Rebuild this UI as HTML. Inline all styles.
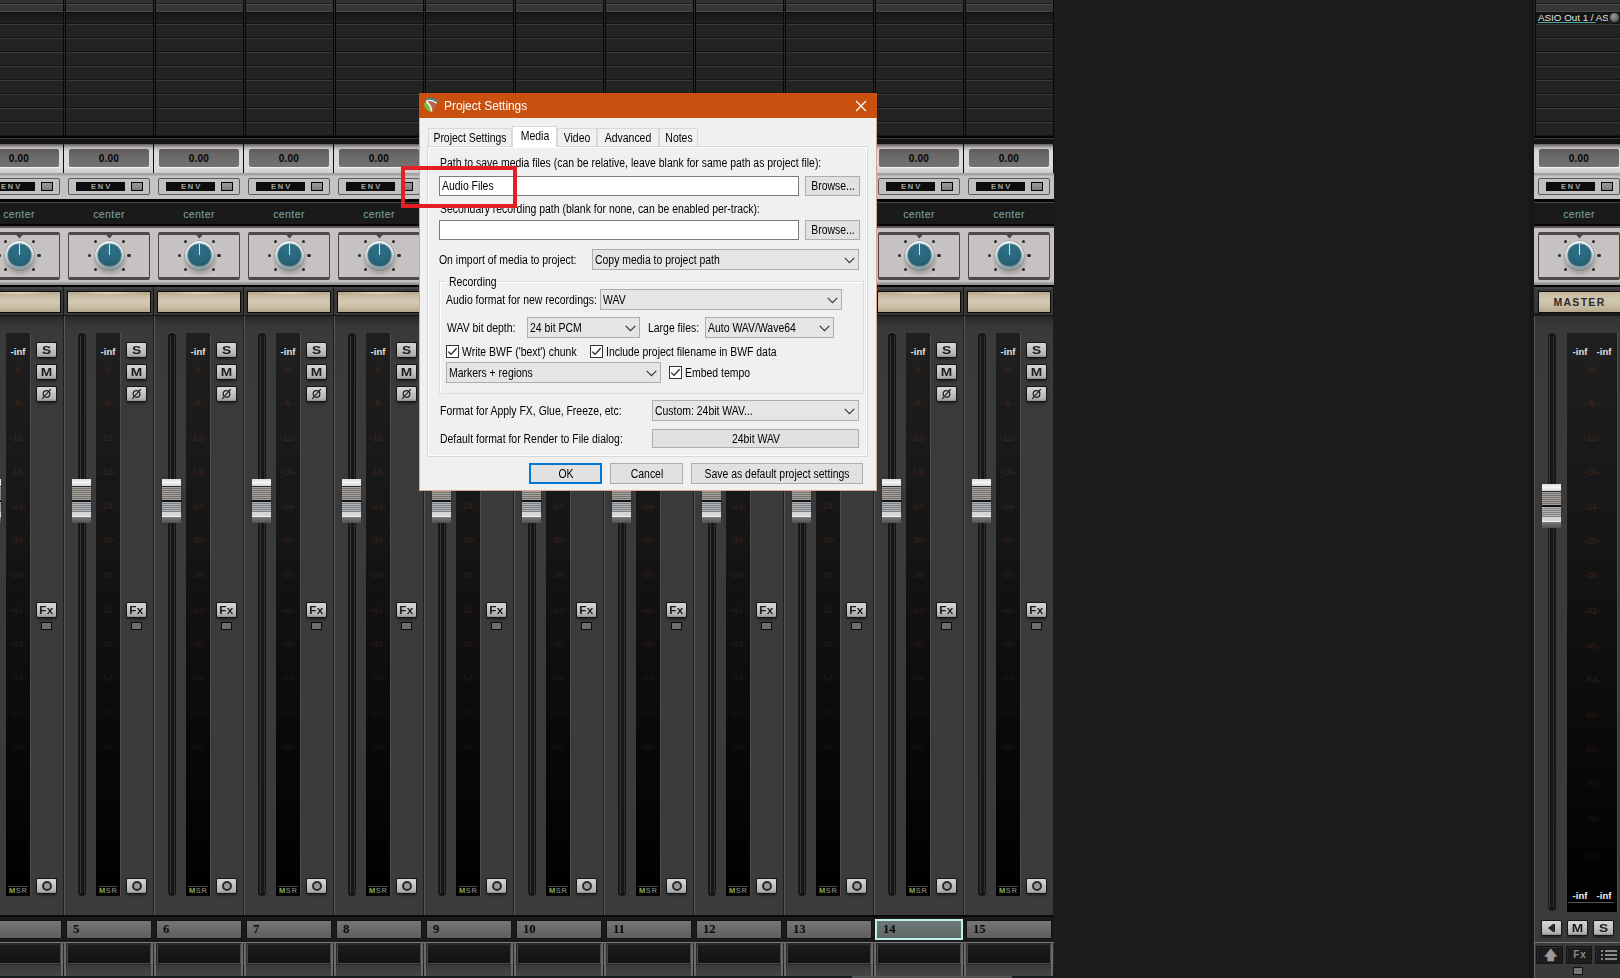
<!DOCTYPE html><html><head><meta charset="utf-8"><style>
*{box-sizing:border-box;margin:0;padding:0}
html,body{width:1620px;height:978px;overflow:hidden;background:#1c1c1c;font-family:"Liberation Sans",sans-serif}
div{position:absolute}
.strip{top:0;width:90px;height:978px;overflow:hidden}
.btn{background:linear-gradient(#d6d6d6,#c6c6c6 40%,#b2b2b2 85%,#8c8c8c);border-radius:1px;box-shadow:0 0 0 1px #161616,0 2px 3px rgba(0,0,0,.6);color:#1c1c1c;font-weight:bold;font-size:11px;text-align:center;line-height:14px}
.bl{display:inline-block;transform:scaleX(1.25)}
.lbl{white-space:nowrap;transform-origin:0 50%;color:#000;font-size:12px;line-height:14px}
.combo{background:#e5e5e5;border:1px solid #adadad}
.wbtn{background:#e1e1e1;border:1px solid #adadad}
.chev{width:9px;height:9px;border-right:1px solid #333;border-bottom:1px solid #333;transform:rotate(45deg)}
.cb{width:13px;height:13px;border:1px solid #333;background:#fff}
.db{color:#3e2619;font-size:9px;font-weight:bold;text-align:center;line-height:8px;filter:blur(.6px);opacity:.85}
</style></head><body><div class="strip" style="left:-26px"><div style="left:0px;top:0px;width:90px;height:3px;background:#333"></div><div style="left:0px;top:3px;width:90px;height:1px;background:#1a1a1a"></div><div style="left:0px;top:4px;width:90px;height:1px;background:#4a4a4a"></div><div style="left:0px;top:5px;width:90px;height:6px;background:#363636"></div><div style="left:0px;top:11px;width:90px;height:1px;background:#4c4c4c"></div><div style="left:0px;top:12px;width:90px;height:1px;background:#0d0d0d"></div><div style="left:0px;top:13px;width:90px;height:10px;background:linear-gradient(#171717,#212121)"></div><div style="left:0px;top:23px;width:90px;height:1px;background:#141414"></div><div style="left:0px;top:24px;width:90px;height:1px;background:#3a3a3a"></div><div style="left:0px;top:25px;width:90px;height:12px;background:#232323"></div><div style="left:0px;top:37px;width:90px;height:1px;background:#141414"></div><div style="left:0px;top:38px;width:90px;height:1px;background:#3a3a3a"></div><div style="left:0px;top:39px;width:90px;height:12px;background:#232323"></div><div style="left:0px;top:51px;width:90px;height:1px;background:#141414"></div><div style="left:0px;top:52px;width:90px;height:1px;background:#3a3a3a"></div><div style="left:0px;top:53px;width:90px;height:12px;background:#232323"></div><div style="left:0px;top:65px;width:90px;height:1px;background:#141414"></div><div style="left:0px;top:66px;width:90px;height:1px;background:#3a3a3a"></div><div style="left:0px;top:67px;width:90px;height:12px;background:#232323"></div><div style="left:0px;top:79px;width:90px;height:1px;background:#141414"></div><div style="left:0px;top:80px;width:90px;height:1px;background:#3a3a3a"></div><div style="left:0px;top:81px;width:90px;height:12px;background:#232323"></div><div style="left:0px;top:93px;width:90px;height:1px;background:#141414"></div><div style="left:0px;top:94px;width:90px;height:1px;background:#3a3a3a"></div><div style="left:0px;top:95px;width:90px;height:12px;background:#232323"></div><div style="left:0px;top:107px;width:90px;height:1px;background:#141414"></div><div style="left:0px;top:108px;width:90px;height:1px;background:#3a3a3a"></div><div style="left:0px;top:109px;width:90px;height:12px;background:#232323"></div><div style="left:0px;top:121px;width:90px;height:1px;background:#141414"></div><div style="left:0px;top:122px;width:90px;height:1px;background:#3a3a3a"></div><div style="left:0px;top:123px;width:90px;height:12px;background:#232323"></div><div style="left:0px;top:135px;width:90px;height:1px;background:#141414"></div><div style="left:0px;top:136px;width:90px;height:1px;background:#3a3a3a"></div><div style="left:0px;top:0px;width:1px;height:136px;background:#262626"></div><div style="left:1px;top:0px;width:1px;height:136px;background:#080808"></div><div style="left:89px;top:0px;width:1px;height:136px;background:#080808"></div><div style="left:0px;top:136px;width:90px;height:2px;background:#050505"></div><div style="left:0px;top:138px;width:90px;height:1px;background:#3a3a3a"></div><div style="left:0px;top:139px;width:90px;height:5px;background:#151515"></div><div style="left:0px;top:144px;width:90px;height:29px;background:linear-gradient(#5e5c5c,#bebcbc 4px,#dad8d8 8px,#dcdada 24px,#cfcdcd)"></div><div style="left:89px;top:144px;width:1px;height:29px;background:#0a0a0a"></div><div style="left:5px;top:149px;width:80px;height:18px;background:linear-gradient(#5c5858,#6a6767 30%,#747272);border-radius:2px;box-shadow:0 1px 0 #f4f4f4;font-weight:bold;font-size:10px;color:#050505;text-align:center;line-height:19px;letter-spacing:.2px">0.00</div><div style="left:0px;top:173px;width:90px;height:3px;background:linear-gradient(#9a9898,#b6b4b4)"></div><div style="left:0px;top:176px;width:90px;height:23px;background:#c4c2c2"></div><div style="left:4px;top:178px;width:82px;height:17px;border:1px solid #5e5a5a;border-radius:2px;background:#c2c0c0"></div><div style="left:12px;top:182px;width:49px;height:9px;background:#0c0c0c;color:#a8a8a8;font-size:7.5px;font-weight:bold;letter-spacing:1.9px;text-align:center;line-height:9px;text-indent:2px">ENV</div><div style="left:67px;top:182px;width:12px;height:9px;border:1px solid #050505;background:linear-gradient(#9a9a9a,#7c7c7c)"></div><div style="left:0px;top:199px;width:90px;height:3px;background:#050505"></div><div style="left:0px;top:202px;width:90px;height:1px;background:#444"></div><div style="left:0px;top:203px;width:90px;height:21px;background:#1a1a1a;color:#84a0a8;font-size:10.5px;text-align:center;line-height:22px;letter-spacing:.4px;text-shadow:0 0 2px #0a3038">center</div><div style="left:0px;top:224px;width:90px;height:2px;background:#050505"></div><div style="left:0px;top:226px;width:90px;height:2px;background:#5a5858"></div><div style="left:0px;top:228px;width:90px;height:54px;background:#c6c2c2"></div><div style="left:4px;top:232px;width:82px;height:48px;border:1px solid #4a4646;border-top:3px solid #4c4848;border-bottom:3px solid #4c4848;border-radius:2px;background:#c6c2c2"></div><div style="left:41.5px;top:234px;width:8px;height:4.5px;background:#4c4848;clip-path:polygon(0 0,100% 0,50% 100%)"></div><div style="left:29.799999999999997px;top:239.9px;width:3.2px;height:3.2px;background:#2e2828;border-radius:50%"></div><div style="left:57.8px;top:239.9px;width:3.2px;height:3.2px;background:#2e2828;border-radius:50%"></div><div style="left:24.099999999999998px;top:253.9px;width:3.2px;height:3.2px;background:#2e2828;border-radius:50%"></div><div style="left:63.4px;top:253.9px;width:3.2px;height:3.2px;background:#2e2828;border-radius:50%"></div><div style="left:29.799999999999997px;top:267.9px;width:3.2px;height:3.2px;background:#2e2828;border-radius:50%"></div><div style="left:57.8px;top:267.9px;width:3.2px;height:3.2px;background:#2e2828;border-radius:50%"></div><div style="left:28.4px;top:244.5px;width:36px;height:32px;border-radius:50%;background:radial-gradient(closest-side,rgba(40,30,30,.55),rgba(40,30,30,0))"></div><div style="left:30.799999999999997px;top:240.7px;width:29.3px;height:29.6px;border-radius:50%;background:linear-gradient(175deg,#f0f4f4 0%,#d4dcdd 40%,#a3b3b6 75%,#7d9195 100%);box-shadow:0 0 0 .6px rgba(70,80,80,.45)"></div><div style="left:34.2px;top:243.8px;width:22.4px;height:22.4px;border-radius:50%;background:radial-gradient(circle at 50% 30%,#2f7188,#28657b 60%,#1e5062 100%);box-shadow:0 0 0 .6px #5a7a80"></div><div style="left:44.699999999999996px;top:244.0px;width:1.4px;height:10.5px;background:#cdeed6"></div><div style="left:0px;top:282px;width:90px;height:3px;background:linear-gradient(#b0acac,#8e8a8a)"></div><div style="left:0px;top:285px;width:90px;height:2px;background:#050505"></div><div style="left:0px;top:287px;width:90px;height:29px;background:#383836"></div><div style="left:0px;top:287px;width:90px;height:2px;background:#42464c"></div><div style="left:0px;top:315px;width:90px;height:1px;background:#141414"></div><div style="left:89px;top:287px;width:1px;height:29px;background:#141414"></div><div style="left:3px;top:291px;width:84px;height:22px;background:#0e0c0a"></div><div style="left:4px;top:292px;width:82px;height:20px;background:radial-gradient(ellipse 40% 3px at 50% 0,rgba(255,235,200,.8),rgba(255,235,200,0)),linear-gradient(#b6a78c,#cbc0a6 25%,#d3c9b4 50%,#c6baa2 80%,#b3a68c)"></div><div style="left:0px;top:316px;width:90px;height:599px;background:linear-gradient(#262626 0,#353535 8px,#3a3a3a 16px,#3b3b3b)"></div><div style="left:0px;top:316px;width:1px;height:599px;background:#585858"></div><div style="left:89px;top:316px;width:1px;height:599px;background:#1e1e1e"></div><div style="left:14px;top:333px;width:8px;height:563px;background:#161616;border-radius:4px;box-shadow:0 -1px 0 #444"></div><div style="left:15.5px;top:336px;width:1px;height:557px;background:#3a3a3a"></div><div style="left:19.5px;top:336px;width:1px;height:557px;background:#2e2e2e"></div><div style="left:32px;top:333px;width:24px;height:563px;background:linear-gradient(#1f1f1f,#141414 40%,#050505 85%,#000)"></div><div style="left:56px;top:333px;width:1px;height:563px;background:#4c4c4c"></div><div style="left:32px;top:346px;width:24px;height:12px;color:#e2e2e2;font-size:9.5px;font-weight:bold;text-align:center;line-height:12px">-inf</div><div class="db" style="left:32px;top:365.6px;width:24px;height:8px;opacity:0.95">-0-</div><div class="db" style="left:32px;top:399px;width:24px;height:8px;opacity:0.88">-6-</div><div class="db" style="left:32px;top:433.8px;width:24px;height:8px;opacity:0.81">-12-</div><div class="db" style="left:32px;top:468px;width:24px;height:8px;opacity:0.74">-18-</div><div class="db" style="left:32px;top:502px;width:24px;height:8px;opacity:0.67">-24-</div><div class="db" style="left:32px;top:536px;width:24px;height:8px;opacity:0.60">-30-</div><div class="db" style="left:32px;top:571px;width:24px;height:8px;opacity:0.53">-36-</div><div class="db" style="left:32px;top:605.7px;width:24px;height:8px;opacity:0.46">-42-</div><div class="db" style="left:32px;top:639.5px;width:24px;height:8px;opacity:0.39">-48-</div><div class="db" style="left:32px;top:674px;width:24px;height:8px;opacity:0.32">-54-</div><div class="db" style="left:32px;top:709px;width:24px;height:8px;opacity:0.25">-60-</div><div class="db" style="left:32px;top:743px;width:24px;height:8px;opacity:0.25">-66-</div><div style="left:34px;top:886px;width:20px;height:1px;background:#454545"></div><div style="left:34px;top:887px;width:22px;height:8px;font-size:7.5px;font-weight:bold;line-height:8px;color:#6f6f6f;letter-spacing:.6px;text-indent:1px"><span style="color:#86a85a">M</span>SR</div><div class="btn" style="left:63px;top:343px;width:19px;height:14px;"><span class="bl">S</span></div><div class="btn" style="left:63px;top:365px;width:19px;height:14px;"><span class="bl">M</span></div><div class="btn" style="left:63px;top:387px;width:19px;height:14px;"><svg style="position:absolute;left:4px;top:1px" width="11" height="12" viewBox="0 0 11 12"><circle cx="5.5" cy="6" r="3.3" fill="none" stroke="#222" stroke-width="1.3"/><path d="M1.2 10.8L9.8 1.2" stroke="#222" stroke-width="1.2"/></svg></div><div class="btn" style="left:63px;top:603px;width:19px;height:14px;font-size:10.5px;letter-spacing:.2px"><span class="bl" style="transform:scaleX(1.12)">Fx</span></div><div style="left:67px;top:622px;width:11px;height:8px;border:1px solid #0a0a0a;background:#6e6e6e"></div><div class="btn" style="left:63px;top:879px;width:19px;height:14px;"><div style="left:5px;top:2px;width:10px;height:10px;border-radius:50%;border:2px solid #2a2a2a;background:#9a9a9a"></div></div><div style="left:5px;top:477px;width:25px;height:49px;background:radial-gradient(closest-side,rgba(0,0,0,.6),rgba(0,0,0,0))"></div><div style="left:8px;top:479px;width:19px;height:7px;background:linear-gradient(#dcdcdc,#f6f6f6 50%,#d4d4d4)"></div><div style="left:8px;top:486px;width:19px;height:1px;background:#2a2826"></div><div style="left:8px;top:487px;width:19px;height:13px;background:repeating-linear-gradient(#a6a29e 0,#a6a29e 1px,#75716d 1px,#75716d 2px)"></div><div style="left:8px;top:500px;width:19px;height:2px;background:#121212"></div><div style="left:8px;top:502px;width:19px;height:10px;background:repeating-linear-gradient(#b0b4b6 0,#b0b4b6 1px,#7e8284 1px,#7e8284 2px)"></div><div style="left:8px;top:512px;width:19px;height:4px;background:#d6d6d4"></div><div style="left:8px;top:516px;width:19px;height:1px;background:#f2f2f2"></div><div style="left:8px;top:517px;width:19px;height:6px;background:linear-gradient(#7c7c7c,#505050)"></div><div style="left:0px;top:915px;width:90px;height:2px;background:#0a0a0a"></div><div style="left:0px;top:917px;width:90px;height:25px;background:#1a1a1a"></div><div style="left:2px;top:920px;width:86px;height:19px;background:#111"></div><div style="left:3px;top:921px;width:84px;height:17px;background:linear-gradient(#777,#6a6a6a 50%,#5e5e5e)"></div><div style="left:9px;top:921px;width:40px;height:17px;font-family:'Liberation Serif',serif;font-weight:bold;font-size:12.5px;line-height:17px;color:#0a0a0a"></div><div style="left:0px;top:942px;width:90px;height:1px;background:#7a7a7a"></div><div style="left:0px;top:943px;width:90px;height:22px;background:#2a2a2a"></div><div style="left:0px;top:942px;width:2px;height:34px;background:#6a6a6a"></div><div style="left:87px;top:942px;width:2px;height:34px;background:#6a6a6a"></div><div style="left:3px;top:944px;width:84px;height:20px;background:linear-gradient(#1c1c1c,#121212);border:1px solid #4a4a4a;border-top-color:#2a2a2a"></div><div style="left:2px;top:965px;width:85px;height:11px;background:linear-gradient(#3a3a3a,#454545)"></div><div style="left:0px;top:976px;width:90px;height:2px;background:#1b1e21"></div></div><div class="strip" style="left:64px"><div style="left:0px;top:0px;width:90px;height:3px;background:#333"></div><div style="left:0px;top:3px;width:90px;height:1px;background:#1a1a1a"></div><div style="left:0px;top:4px;width:90px;height:1px;background:#4a4a4a"></div><div style="left:0px;top:5px;width:90px;height:6px;background:#363636"></div><div style="left:0px;top:11px;width:90px;height:1px;background:#4c4c4c"></div><div style="left:0px;top:12px;width:90px;height:1px;background:#0d0d0d"></div><div style="left:0px;top:13px;width:90px;height:10px;background:linear-gradient(#171717,#212121)"></div><div style="left:0px;top:23px;width:90px;height:1px;background:#141414"></div><div style="left:0px;top:24px;width:90px;height:1px;background:#3a3a3a"></div><div style="left:0px;top:25px;width:90px;height:12px;background:#232323"></div><div style="left:0px;top:37px;width:90px;height:1px;background:#141414"></div><div style="left:0px;top:38px;width:90px;height:1px;background:#3a3a3a"></div><div style="left:0px;top:39px;width:90px;height:12px;background:#232323"></div><div style="left:0px;top:51px;width:90px;height:1px;background:#141414"></div><div style="left:0px;top:52px;width:90px;height:1px;background:#3a3a3a"></div><div style="left:0px;top:53px;width:90px;height:12px;background:#232323"></div><div style="left:0px;top:65px;width:90px;height:1px;background:#141414"></div><div style="left:0px;top:66px;width:90px;height:1px;background:#3a3a3a"></div><div style="left:0px;top:67px;width:90px;height:12px;background:#232323"></div><div style="left:0px;top:79px;width:90px;height:1px;background:#141414"></div><div style="left:0px;top:80px;width:90px;height:1px;background:#3a3a3a"></div><div style="left:0px;top:81px;width:90px;height:12px;background:#232323"></div><div style="left:0px;top:93px;width:90px;height:1px;background:#141414"></div><div style="left:0px;top:94px;width:90px;height:1px;background:#3a3a3a"></div><div style="left:0px;top:95px;width:90px;height:12px;background:#232323"></div><div style="left:0px;top:107px;width:90px;height:1px;background:#141414"></div><div style="left:0px;top:108px;width:90px;height:1px;background:#3a3a3a"></div><div style="left:0px;top:109px;width:90px;height:12px;background:#232323"></div><div style="left:0px;top:121px;width:90px;height:1px;background:#141414"></div><div style="left:0px;top:122px;width:90px;height:1px;background:#3a3a3a"></div><div style="left:0px;top:123px;width:90px;height:12px;background:#232323"></div><div style="left:0px;top:135px;width:90px;height:1px;background:#141414"></div><div style="left:0px;top:136px;width:90px;height:1px;background:#3a3a3a"></div><div style="left:0px;top:0px;width:1px;height:136px;background:#262626"></div><div style="left:1px;top:0px;width:1px;height:136px;background:#080808"></div><div style="left:89px;top:0px;width:1px;height:136px;background:#080808"></div><div style="left:0px;top:136px;width:90px;height:2px;background:#050505"></div><div style="left:0px;top:138px;width:90px;height:1px;background:#3a3a3a"></div><div style="left:0px;top:139px;width:90px;height:5px;background:#151515"></div><div style="left:0px;top:144px;width:90px;height:29px;background:linear-gradient(#5e5c5c,#bebcbc 4px,#dad8d8 8px,#dcdada 24px,#cfcdcd)"></div><div style="left:89px;top:144px;width:1px;height:29px;background:#0a0a0a"></div><div style="left:5px;top:149px;width:80px;height:18px;background:linear-gradient(#5c5858,#6a6767 30%,#747272);border-radius:2px;box-shadow:0 1px 0 #f4f4f4;font-weight:bold;font-size:10px;color:#050505;text-align:center;line-height:19px;letter-spacing:.2px">0.00</div><div style="left:0px;top:173px;width:90px;height:3px;background:linear-gradient(#9a9898,#b6b4b4)"></div><div style="left:0px;top:176px;width:90px;height:23px;background:#c4c2c2"></div><div style="left:4px;top:178px;width:82px;height:17px;border:1px solid #5e5a5a;border-radius:2px;background:#c2c0c0"></div><div style="left:12px;top:182px;width:49px;height:9px;background:#0c0c0c;color:#a8a8a8;font-size:7.5px;font-weight:bold;letter-spacing:1.9px;text-align:center;line-height:9px;text-indent:2px">ENV</div><div style="left:67px;top:182px;width:12px;height:9px;border:1px solid #050505;background:linear-gradient(#9a9a9a,#7c7c7c)"></div><div style="left:0px;top:199px;width:90px;height:3px;background:#050505"></div><div style="left:0px;top:202px;width:90px;height:1px;background:#444"></div><div style="left:0px;top:203px;width:90px;height:21px;background:#1a1a1a;color:#84a0a8;font-size:10.5px;text-align:center;line-height:22px;letter-spacing:.4px;text-shadow:0 0 2px #0a3038">center</div><div style="left:0px;top:224px;width:90px;height:2px;background:#050505"></div><div style="left:0px;top:226px;width:90px;height:2px;background:#5a5858"></div><div style="left:0px;top:228px;width:90px;height:54px;background:#c6c2c2"></div><div style="left:4px;top:232px;width:82px;height:48px;border:1px solid #4a4646;border-top:3px solid #4c4848;border-bottom:3px solid #4c4848;border-radius:2px;background:#c6c2c2"></div><div style="left:41.5px;top:234px;width:8px;height:4.5px;background:#4c4848;clip-path:polygon(0 0,100% 0,50% 100%)"></div><div style="left:29.799999999999997px;top:239.9px;width:3.2px;height:3.2px;background:#2e2828;border-radius:50%"></div><div style="left:57.8px;top:239.9px;width:3.2px;height:3.2px;background:#2e2828;border-radius:50%"></div><div style="left:24.099999999999998px;top:253.9px;width:3.2px;height:3.2px;background:#2e2828;border-radius:50%"></div><div style="left:63.4px;top:253.9px;width:3.2px;height:3.2px;background:#2e2828;border-radius:50%"></div><div style="left:29.799999999999997px;top:267.9px;width:3.2px;height:3.2px;background:#2e2828;border-radius:50%"></div><div style="left:57.8px;top:267.9px;width:3.2px;height:3.2px;background:#2e2828;border-radius:50%"></div><div style="left:28.4px;top:244.5px;width:36px;height:32px;border-radius:50%;background:radial-gradient(closest-side,rgba(40,30,30,.55),rgba(40,30,30,0))"></div><div style="left:30.799999999999997px;top:240.7px;width:29.3px;height:29.6px;border-radius:50%;background:linear-gradient(175deg,#f0f4f4 0%,#d4dcdd 40%,#a3b3b6 75%,#7d9195 100%);box-shadow:0 0 0 .6px rgba(70,80,80,.45)"></div><div style="left:34.2px;top:243.8px;width:22.4px;height:22.4px;border-radius:50%;background:radial-gradient(circle at 50% 30%,#2f7188,#28657b 60%,#1e5062 100%);box-shadow:0 0 0 .6px #5a7a80"></div><div style="left:44.699999999999996px;top:244.0px;width:1.4px;height:10.5px;background:#cdeed6"></div><div style="left:0px;top:282px;width:90px;height:3px;background:linear-gradient(#b0acac,#8e8a8a)"></div><div style="left:0px;top:285px;width:90px;height:2px;background:#050505"></div><div style="left:0px;top:287px;width:90px;height:29px;background:#383836"></div><div style="left:0px;top:287px;width:90px;height:2px;background:#42464c"></div><div style="left:0px;top:315px;width:90px;height:1px;background:#141414"></div><div style="left:89px;top:287px;width:1px;height:29px;background:#141414"></div><div style="left:3px;top:291px;width:84px;height:22px;background:#0e0c0a"></div><div style="left:4px;top:292px;width:82px;height:20px;background:radial-gradient(ellipse 40% 3px at 50% 0,rgba(255,235,200,.8),rgba(255,235,200,0)),linear-gradient(#b6a78c,#cbc0a6 25%,#d3c9b4 50%,#c6baa2 80%,#b3a68c)"></div><div style="left:0px;top:316px;width:90px;height:599px;background:linear-gradient(#262626 0,#353535 8px,#3a3a3a 16px,#3b3b3b)"></div><div style="left:0px;top:316px;width:1px;height:599px;background:#585858"></div><div style="left:89px;top:316px;width:1px;height:599px;background:#1e1e1e"></div><div style="left:14px;top:333px;width:8px;height:563px;background:#161616;border-radius:4px;box-shadow:0 -1px 0 #444"></div><div style="left:15.5px;top:336px;width:1px;height:557px;background:#3a3a3a"></div><div style="left:19.5px;top:336px;width:1px;height:557px;background:#2e2e2e"></div><div style="left:32px;top:333px;width:24px;height:563px;background:linear-gradient(#1f1f1f,#141414 40%,#050505 85%,#000)"></div><div style="left:56px;top:333px;width:1px;height:563px;background:#4c4c4c"></div><div style="left:32px;top:346px;width:24px;height:12px;color:#e2e2e2;font-size:9.5px;font-weight:bold;text-align:center;line-height:12px">-inf</div><div class="db" style="left:32px;top:365.6px;width:24px;height:8px;opacity:0.95">-0-</div><div class="db" style="left:32px;top:399px;width:24px;height:8px;opacity:0.88">-6-</div><div class="db" style="left:32px;top:433.8px;width:24px;height:8px;opacity:0.81">-12-</div><div class="db" style="left:32px;top:468px;width:24px;height:8px;opacity:0.74">-18-</div><div class="db" style="left:32px;top:502px;width:24px;height:8px;opacity:0.67">-24-</div><div class="db" style="left:32px;top:536px;width:24px;height:8px;opacity:0.60">-30-</div><div class="db" style="left:32px;top:571px;width:24px;height:8px;opacity:0.53">-36-</div><div class="db" style="left:32px;top:605.7px;width:24px;height:8px;opacity:0.46">-42-</div><div class="db" style="left:32px;top:639.5px;width:24px;height:8px;opacity:0.39">-48-</div><div class="db" style="left:32px;top:674px;width:24px;height:8px;opacity:0.32">-54-</div><div class="db" style="left:32px;top:709px;width:24px;height:8px;opacity:0.25">-60-</div><div class="db" style="left:32px;top:743px;width:24px;height:8px;opacity:0.25">-66-</div><div style="left:34px;top:886px;width:20px;height:1px;background:#454545"></div><div style="left:34px;top:887px;width:22px;height:8px;font-size:7.5px;font-weight:bold;line-height:8px;color:#6f6f6f;letter-spacing:.6px;text-indent:1px"><span style="color:#86a85a">M</span>SR</div><div class="btn" style="left:63px;top:343px;width:19px;height:14px;"><span class="bl">S</span></div><div class="btn" style="left:63px;top:365px;width:19px;height:14px;"><span class="bl">M</span></div><div class="btn" style="left:63px;top:387px;width:19px;height:14px;"><svg style="position:absolute;left:4px;top:1px" width="11" height="12" viewBox="0 0 11 12"><circle cx="5.5" cy="6" r="3.3" fill="none" stroke="#222" stroke-width="1.3"/><path d="M1.2 10.8L9.8 1.2" stroke="#222" stroke-width="1.2"/></svg></div><div class="btn" style="left:63px;top:603px;width:19px;height:14px;font-size:10.5px;letter-spacing:.2px"><span class="bl" style="transform:scaleX(1.12)">Fx</span></div><div style="left:67px;top:622px;width:11px;height:8px;border:1px solid #0a0a0a;background:#6e6e6e"></div><div class="btn" style="left:63px;top:879px;width:19px;height:14px;"><div style="left:5px;top:2px;width:10px;height:10px;border-radius:50%;border:2px solid #2a2a2a;background:#9a9a9a"></div></div><div style="left:5px;top:477px;width:25px;height:49px;background:radial-gradient(closest-side,rgba(0,0,0,.6),rgba(0,0,0,0))"></div><div style="left:8px;top:479px;width:19px;height:7px;background:linear-gradient(#dcdcdc,#f6f6f6 50%,#d4d4d4)"></div><div style="left:8px;top:486px;width:19px;height:1px;background:#2a2826"></div><div style="left:8px;top:487px;width:19px;height:13px;background:repeating-linear-gradient(#a6a29e 0,#a6a29e 1px,#75716d 1px,#75716d 2px)"></div><div style="left:8px;top:500px;width:19px;height:2px;background:#121212"></div><div style="left:8px;top:502px;width:19px;height:10px;background:repeating-linear-gradient(#b0b4b6 0,#b0b4b6 1px,#7e8284 1px,#7e8284 2px)"></div><div style="left:8px;top:512px;width:19px;height:4px;background:#d6d6d4"></div><div style="left:8px;top:516px;width:19px;height:1px;background:#f2f2f2"></div><div style="left:8px;top:517px;width:19px;height:6px;background:linear-gradient(#7c7c7c,#505050)"></div><div style="left:0px;top:915px;width:90px;height:2px;background:#0a0a0a"></div><div style="left:0px;top:917px;width:90px;height:25px;background:#1a1a1a"></div><div style="left:2px;top:920px;width:86px;height:19px;background:#111"></div><div style="left:3px;top:921px;width:84px;height:17px;background:linear-gradient(#777,#6a6a6a 50%,#5e5e5e)"></div><div style="left:9px;top:921px;width:40px;height:17px;font-family:'Liberation Serif',serif;font-weight:bold;font-size:12.5px;line-height:17px;color:#0a0a0a">5</div><div style="left:0px;top:942px;width:90px;height:1px;background:#7a7a7a"></div><div style="left:0px;top:943px;width:90px;height:22px;background:#2a2a2a"></div><div style="left:0px;top:942px;width:2px;height:34px;background:#6a6a6a"></div><div style="left:87px;top:942px;width:2px;height:34px;background:#6a6a6a"></div><div style="left:3px;top:944px;width:84px;height:20px;background:linear-gradient(#1c1c1c,#121212);border:1px solid #4a4a4a;border-top-color:#2a2a2a"></div><div style="left:2px;top:965px;width:85px;height:11px;background:linear-gradient(#3a3a3a,#454545)"></div><div style="left:0px;top:976px;width:90px;height:2px;background:#1b1e21"></div></div><div class="strip" style="left:154px"><div style="left:0px;top:0px;width:90px;height:3px;background:#333"></div><div style="left:0px;top:3px;width:90px;height:1px;background:#1a1a1a"></div><div style="left:0px;top:4px;width:90px;height:1px;background:#4a4a4a"></div><div style="left:0px;top:5px;width:90px;height:6px;background:#363636"></div><div style="left:0px;top:11px;width:90px;height:1px;background:#4c4c4c"></div><div style="left:0px;top:12px;width:90px;height:1px;background:#0d0d0d"></div><div style="left:0px;top:13px;width:90px;height:10px;background:linear-gradient(#171717,#212121)"></div><div style="left:0px;top:23px;width:90px;height:1px;background:#141414"></div><div style="left:0px;top:24px;width:90px;height:1px;background:#3a3a3a"></div><div style="left:0px;top:25px;width:90px;height:12px;background:#232323"></div><div style="left:0px;top:37px;width:90px;height:1px;background:#141414"></div><div style="left:0px;top:38px;width:90px;height:1px;background:#3a3a3a"></div><div style="left:0px;top:39px;width:90px;height:12px;background:#232323"></div><div style="left:0px;top:51px;width:90px;height:1px;background:#141414"></div><div style="left:0px;top:52px;width:90px;height:1px;background:#3a3a3a"></div><div style="left:0px;top:53px;width:90px;height:12px;background:#232323"></div><div style="left:0px;top:65px;width:90px;height:1px;background:#141414"></div><div style="left:0px;top:66px;width:90px;height:1px;background:#3a3a3a"></div><div style="left:0px;top:67px;width:90px;height:12px;background:#232323"></div><div style="left:0px;top:79px;width:90px;height:1px;background:#141414"></div><div style="left:0px;top:80px;width:90px;height:1px;background:#3a3a3a"></div><div style="left:0px;top:81px;width:90px;height:12px;background:#232323"></div><div style="left:0px;top:93px;width:90px;height:1px;background:#141414"></div><div style="left:0px;top:94px;width:90px;height:1px;background:#3a3a3a"></div><div style="left:0px;top:95px;width:90px;height:12px;background:#232323"></div><div style="left:0px;top:107px;width:90px;height:1px;background:#141414"></div><div style="left:0px;top:108px;width:90px;height:1px;background:#3a3a3a"></div><div style="left:0px;top:109px;width:90px;height:12px;background:#232323"></div><div style="left:0px;top:121px;width:90px;height:1px;background:#141414"></div><div style="left:0px;top:122px;width:90px;height:1px;background:#3a3a3a"></div><div style="left:0px;top:123px;width:90px;height:12px;background:#232323"></div><div style="left:0px;top:135px;width:90px;height:1px;background:#141414"></div><div style="left:0px;top:136px;width:90px;height:1px;background:#3a3a3a"></div><div style="left:0px;top:0px;width:1px;height:136px;background:#262626"></div><div style="left:1px;top:0px;width:1px;height:136px;background:#080808"></div><div style="left:89px;top:0px;width:1px;height:136px;background:#080808"></div><div style="left:0px;top:136px;width:90px;height:2px;background:#050505"></div><div style="left:0px;top:138px;width:90px;height:1px;background:#3a3a3a"></div><div style="left:0px;top:139px;width:90px;height:5px;background:#151515"></div><div style="left:0px;top:144px;width:90px;height:29px;background:linear-gradient(#5e5c5c,#bebcbc 4px,#dad8d8 8px,#dcdada 24px,#cfcdcd)"></div><div style="left:89px;top:144px;width:1px;height:29px;background:#0a0a0a"></div><div style="left:5px;top:149px;width:80px;height:18px;background:linear-gradient(#5c5858,#6a6767 30%,#747272);border-radius:2px;box-shadow:0 1px 0 #f4f4f4;font-weight:bold;font-size:10px;color:#050505;text-align:center;line-height:19px;letter-spacing:.2px">0.00</div><div style="left:0px;top:173px;width:90px;height:3px;background:linear-gradient(#9a9898,#b6b4b4)"></div><div style="left:0px;top:176px;width:90px;height:23px;background:#c4c2c2"></div><div style="left:4px;top:178px;width:82px;height:17px;border:1px solid #5e5a5a;border-radius:2px;background:#c2c0c0"></div><div style="left:12px;top:182px;width:49px;height:9px;background:#0c0c0c;color:#a8a8a8;font-size:7.5px;font-weight:bold;letter-spacing:1.9px;text-align:center;line-height:9px;text-indent:2px">ENV</div><div style="left:67px;top:182px;width:12px;height:9px;border:1px solid #050505;background:linear-gradient(#9a9a9a,#7c7c7c)"></div><div style="left:0px;top:199px;width:90px;height:3px;background:#050505"></div><div style="left:0px;top:202px;width:90px;height:1px;background:#444"></div><div style="left:0px;top:203px;width:90px;height:21px;background:#1a1a1a;color:#84a0a8;font-size:10.5px;text-align:center;line-height:22px;letter-spacing:.4px;text-shadow:0 0 2px #0a3038">center</div><div style="left:0px;top:224px;width:90px;height:2px;background:#050505"></div><div style="left:0px;top:226px;width:90px;height:2px;background:#5a5858"></div><div style="left:0px;top:228px;width:90px;height:54px;background:#c6c2c2"></div><div style="left:4px;top:232px;width:82px;height:48px;border:1px solid #4a4646;border-top:3px solid #4c4848;border-bottom:3px solid #4c4848;border-radius:2px;background:#c6c2c2"></div><div style="left:41.5px;top:234px;width:8px;height:4.5px;background:#4c4848;clip-path:polygon(0 0,100% 0,50% 100%)"></div><div style="left:29.799999999999997px;top:239.9px;width:3.2px;height:3.2px;background:#2e2828;border-radius:50%"></div><div style="left:57.8px;top:239.9px;width:3.2px;height:3.2px;background:#2e2828;border-radius:50%"></div><div style="left:24.099999999999998px;top:253.9px;width:3.2px;height:3.2px;background:#2e2828;border-radius:50%"></div><div style="left:63.4px;top:253.9px;width:3.2px;height:3.2px;background:#2e2828;border-radius:50%"></div><div style="left:29.799999999999997px;top:267.9px;width:3.2px;height:3.2px;background:#2e2828;border-radius:50%"></div><div style="left:57.8px;top:267.9px;width:3.2px;height:3.2px;background:#2e2828;border-radius:50%"></div><div style="left:28.4px;top:244.5px;width:36px;height:32px;border-radius:50%;background:radial-gradient(closest-side,rgba(40,30,30,.55),rgba(40,30,30,0))"></div><div style="left:30.799999999999997px;top:240.7px;width:29.3px;height:29.6px;border-radius:50%;background:linear-gradient(175deg,#f0f4f4 0%,#d4dcdd 40%,#a3b3b6 75%,#7d9195 100%);box-shadow:0 0 0 .6px rgba(70,80,80,.45)"></div><div style="left:34.2px;top:243.8px;width:22.4px;height:22.4px;border-radius:50%;background:radial-gradient(circle at 50% 30%,#2f7188,#28657b 60%,#1e5062 100%);box-shadow:0 0 0 .6px #5a7a80"></div><div style="left:44.699999999999996px;top:244.0px;width:1.4px;height:10.5px;background:#cdeed6"></div><div style="left:0px;top:282px;width:90px;height:3px;background:linear-gradient(#b0acac,#8e8a8a)"></div><div style="left:0px;top:285px;width:90px;height:2px;background:#050505"></div><div style="left:0px;top:287px;width:90px;height:29px;background:#383836"></div><div style="left:0px;top:287px;width:90px;height:2px;background:#42464c"></div><div style="left:0px;top:315px;width:90px;height:1px;background:#141414"></div><div style="left:89px;top:287px;width:1px;height:29px;background:#141414"></div><div style="left:3px;top:291px;width:84px;height:22px;background:#0e0c0a"></div><div style="left:4px;top:292px;width:82px;height:20px;background:radial-gradient(ellipse 40% 3px at 50% 0,rgba(255,235,200,.8),rgba(255,235,200,0)),linear-gradient(#b6a78c,#cbc0a6 25%,#d3c9b4 50%,#c6baa2 80%,#b3a68c)"></div><div style="left:0px;top:316px;width:90px;height:599px;background:linear-gradient(#262626 0,#353535 8px,#3a3a3a 16px,#3b3b3b)"></div><div style="left:0px;top:316px;width:1px;height:599px;background:#585858"></div><div style="left:89px;top:316px;width:1px;height:599px;background:#1e1e1e"></div><div style="left:14px;top:333px;width:8px;height:563px;background:#161616;border-radius:4px;box-shadow:0 -1px 0 #444"></div><div style="left:15.5px;top:336px;width:1px;height:557px;background:#3a3a3a"></div><div style="left:19.5px;top:336px;width:1px;height:557px;background:#2e2e2e"></div><div style="left:32px;top:333px;width:24px;height:563px;background:linear-gradient(#1f1f1f,#141414 40%,#050505 85%,#000)"></div><div style="left:56px;top:333px;width:1px;height:563px;background:#4c4c4c"></div><div style="left:32px;top:346px;width:24px;height:12px;color:#e2e2e2;font-size:9.5px;font-weight:bold;text-align:center;line-height:12px">-inf</div><div class="db" style="left:32px;top:365.6px;width:24px;height:8px;opacity:0.95">-0-</div><div class="db" style="left:32px;top:399px;width:24px;height:8px;opacity:0.88">-6-</div><div class="db" style="left:32px;top:433.8px;width:24px;height:8px;opacity:0.81">-12-</div><div class="db" style="left:32px;top:468px;width:24px;height:8px;opacity:0.74">-18-</div><div class="db" style="left:32px;top:502px;width:24px;height:8px;opacity:0.67">-24-</div><div class="db" style="left:32px;top:536px;width:24px;height:8px;opacity:0.60">-30-</div><div class="db" style="left:32px;top:571px;width:24px;height:8px;opacity:0.53">-36-</div><div class="db" style="left:32px;top:605.7px;width:24px;height:8px;opacity:0.46">-42-</div><div class="db" style="left:32px;top:639.5px;width:24px;height:8px;opacity:0.39">-48-</div><div class="db" style="left:32px;top:674px;width:24px;height:8px;opacity:0.32">-54-</div><div class="db" style="left:32px;top:709px;width:24px;height:8px;opacity:0.25">-60-</div><div class="db" style="left:32px;top:743px;width:24px;height:8px;opacity:0.25">-66-</div><div style="left:34px;top:886px;width:20px;height:1px;background:#454545"></div><div style="left:34px;top:887px;width:22px;height:8px;font-size:7.5px;font-weight:bold;line-height:8px;color:#6f6f6f;letter-spacing:.6px;text-indent:1px"><span style="color:#86a85a">M</span>SR</div><div class="btn" style="left:63px;top:343px;width:19px;height:14px;"><span class="bl">S</span></div><div class="btn" style="left:63px;top:365px;width:19px;height:14px;"><span class="bl">M</span></div><div class="btn" style="left:63px;top:387px;width:19px;height:14px;"><svg style="position:absolute;left:4px;top:1px" width="11" height="12" viewBox="0 0 11 12"><circle cx="5.5" cy="6" r="3.3" fill="none" stroke="#222" stroke-width="1.3"/><path d="M1.2 10.8L9.8 1.2" stroke="#222" stroke-width="1.2"/></svg></div><div class="btn" style="left:63px;top:603px;width:19px;height:14px;font-size:10.5px;letter-spacing:.2px"><span class="bl" style="transform:scaleX(1.12)">Fx</span></div><div style="left:67px;top:622px;width:11px;height:8px;border:1px solid #0a0a0a;background:#6e6e6e"></div><div class="btn" style="left:63px;top:879px;width:19px;height:14px;"><div style="left:5px;top:2px;width:10px;height:10px;border-radius:50%;border:2px solid #2a2a2a;background:#9a9a9a"></div></div><div style="left:5px;top:477px;width:25px;height:49px;background:radial-gradient(closest-side,rgba(0,0,0,.6),rgba(0,0,0,0))"></div><div style="left:8px;top:479px;width:19px;height:7px;background:linear-gradient(#dcdcdc,#f6f6f6 50%,#d4d4d4)"></div><div style="left:8px;top:486px;width:19px;height:1px;background:#2a2826"></div><div style="left:8px;top:487px;width:19px;height:13px;background:repeating-linear-gradient(#a6a29e 0,#a6a29e 1px,#75716d 1px,#75716d 2px)"></div><div style="left:8px;top:500px;width:19px;height:2px;background:#121212"></div><div style="left:8px;top:502px;width:19px;height:10px;background:repeating-linear-gradient(#b0b4b6 0,#b0b4b6 1px,#7e8284 1px,#7e8284 2px)"></div><div style="left:8px;top:512px;width:19px;height:4px;background:#d6d6d4"></div><div style="left:8px;top:516px;width:19px;height:1px;background:#f2f2f2"></div><div style="left:8px;top:517px;width:19px;height:6px;background:linear-gradient(#7c7c7c,#505050)"></div><div style="left:0px;top:915px;width:90px;height:2px;background:#0a0a0a"></div><div style="left:0px;top:917px;width:90px;height:25px;background:#1a1a1a"></div><div style="left:2px;top:920px;width:86px;height:19px;background:#111"></div><div style="left:3px;top:921px;width:84px;height:17px;background:linear-gradient(#777,#6a6a6a 50%,#5e5e5e)"></div><div style="left:9px;top:921px;width:40px;height:17px;font-family:'Liberation Serif',serif;font-weight:bold;font-size:12.5px;line-height:17px;color:#0a0a0a">6</div><div style="left:0px;top:942px;width:90px;height:1px;background:#7a7a7a"></div><div style="left:0px;top:943px;width:90px;height:22px;background:#2a2a2a"></div><div style="left:0px;top:942px;width:2px;height:34px;background:#6a6a6a"></div><div style="left:87px;top:942px;width:2px;height:34px;background:#6a6a6a"></div><div style="left:3px;top:944px;width:84px;height:20px;background:linear-gradient(#1c1c1c,#121212);border:1px solid #4a4a4a;border-top-color:#2a2a2a"></div><div style="left:2px;top:965px;width:85px;height:11px;background:linear-gradient(#3a3a3a,#454545)"></div><div style="left:0px;top:976px;width:90px;height:2px;background:#1b1e21"></div></div><div class="strip" style="left:244px"><div style="left:0px;top:0px;width:90px;height:3px;background:#333"></div><div style="left:0px;top:3px;width:90px;height:1px;background:#1a1a1a"></div><div style="left:0px;top:4px;width:90px;height:1px;background:#4a4a4a"></div><div style="left:0px;top:5px;width:90px;height:6px;background:#363636"></div><div style="left:0px;top:11px;width:90px;height:1px;background:#4c4c4c"></div><div style="left:0px;top:12px;width:90px;height:1px;background:#0d0d0d"></div><div style="left:0px;top:13px;width:90px;height:10px;background:linear-gradient(#171717,#212121)"></div><div style="left:0px;top:23px;width:90px;height:1px;background:#141414"></div><div style="left:0px;top:24px;width:90px;height:1px;background:#3a3a3a"></div><div style="left:0px;top:25px;width:90px;height:12px;background:#232323"></div><div style="left:0px;top:37px;width:90px;height:1px;background:#141414"></div><div style="left:0px;top:38px;width:90px;height:1px;background:#3a3a3a"></div><div style="left:0px;top:39px;width:90px;height:12px;background:#232323"></div><div style="left:0px;top:51px;width:90px;height:1px;background:#141414"></div><div style="left:0px;top:52px;width:90px;height:1px;background:#3a3a3a"></div><div style="left:0px;top:53px;width:90px;height:12px;background:#232323"></div><div style="left:0px;top:65px;width:90px;height:1px;background:#141414"></div><div style="left:0px;top:66px;width:90px;height:1px;background:#3a3a3a"></div><div style="left:0px;top:67px;width:90px;height:12px;background:#232323"></div><div style="left:0px;top:79px;width:90px;height:1px;background:#141414"></div><div style="left:0px;top:80px;width:90px;height:1px;background:#3a3a3a"></div><div style="left:0px;top:81px;width:90px;height:12px;background:#232323"></div><div style="left:0px;top:93px;width:90px;height:1px;background:#141414"></div><div style="left:0px;top:94px;width:90px;height:1px;background:#3a3a3a"></div><div style="left:0px;top:95px;width:90px;height:12px;background:#232323"></div><div style="left:0px;top:107px;width:90px;height:1px;background:#141414"></div><div style="left:0px;top:108px;width:90px;height:1px;background:#3a3a3a"></div><div style="left:0px;top:109px;width:90px;height:12px;background:#232323"></div><div style="left:0px;top:121px;width:90px;height:1px;background:#141414"></div><div style="left:0px;top:122px;width:90px;height:1px;background:#3a3a3a"></div><div style="left:0px;top:123px;width:90px;height:12px;background:#232323"></div><div style="left:0px;top:135px;width:90px;height:1px;background:#141414"></div><div style="left:0px;top:136px;width:90px;height:1px;background:#3a3a3a"></div><div style="left:0px;top:0px;width:1px;height:136px;background:#262626"></div><div style="left:1px;top:0px;width:1px;height:136px;background:#080808"></div><div style="left:89px;top:0px;width:1px;height:136px;background:#080808"></div><div style="left:0px;top:136px;width:90px;height:2px;background:#050505"></div><div style="left:0px;top:138px;width:90px;height:1px;background:#3a3a3a"></div><div style="left:0px;top:139px;width:90px;height:5px;background:#151515"></div><div style="left:0px;top:144px;width:90px;height:29px;background:linear-gradient(#5e5c5c,#bebcbc 4px,#dad8d8 8px,#dcdada 24px,#cfcdcd)"></div><div style="left:89px;top:144px;width:1px;height:29px;background:#0a0a0a"></div><div style="left:5px;top:149px;width:80px;height:18px;background:linear-gradient(#5c5858,#6a6767 30%,#747272);border-radius:2px;box-shadow:0 1px 0 #f4f4f4;font-weight:bold;font-size:10px;color:#050505;text-align:center;line-height:19px;letter-spacing:.2px">0.00</div><div style="left:0px;top:173px;width:90px;height:3px;background:linear-gradient(#9a9898,#b6b4b4)"></div><div style="left:0px;top:176px;width:90px;height:23px;background:#c4c2c2"></div><div style="left:4px;top:178px;width:82px;height:17px;border:1px solid #5e5a5a;border-radius:2px;background:#c2c0c0"></div><div style="left:12px;top:182px;width:49px;height:9px;background:#0c0c0c;color:#a8a8a8;font-size:7.5px;font-weight:bold;letter-spacing:1.9px;text-align:center;line-height:9px;text-indent:2px">ENV</div><div style="left:67px;top:182px;width:12px;height:9px;border:1px solid #050505;background:linear-gradient(#9a9a9a,#7c7c7c)"></div><div style="left:0px;top:199px;width:90px;height:3px;background:#050505"></div><div style="left:0px;top:202px;width:90px;height:1px;background:#444"></div><div style="left:0px;top:203px;width:90px;height:21px;background:#1a1a1a;color:#84a0a8;font-size:10.5px;text-align:center;line-height:22px;letter-spacing:.4px;text-shadow:0 0 2px #0a3038">center</div><div style="left:0px;top:224px;width:90px;height:2px;background:#050505"></div><div style="left:0px;top:226px;width:90px;height:2px;background:#5a5858"></div><div style="left:0px;top:228px;width:90px;height:54px;background:#c6c2c2"></div><div style="left:4px;top:232px;width:82px;height:48px;border:1px solid #4a4646;border-top:3px solid #4c4848;border-bottom:3px solid #4c4848;border-radius:2px;background:#c6c2c2"></div><div style="left:41.5px;top:234px;width:8px;height:4.5px;background:#4c4848;clip-path:polygon(0 0,100% 0,50% 100%)"></div><div style="left:29.799999999999997px;top:239.9px;width:3.2px;height:3.2px;background:#2e2828;border-radius:50%"></div><div style="left:57.8px;top:239.9px;width:3.2px;height:3.2px;background:#2e2828;border-radius:50%"></div><div style="left:24.099999999999998px;top:253.9px;width:3.2px;height:3.2px;background:#2e2828;border-radius:50%"></div><div style="left:63.4px;top:253.9px;width:3.2px;height:3.2px;background:#2e2828;border-radius:50%"></div><div style="left:29.799999999999997px;top:267.9px;width:3.2px;height:3.2px;background:#2e2828;border-radius:50%"></div><div style="left:57.8px;top:267.9px;width:3.2px;height:3.2px;background:#2e2828;border-radius:50%"></div><div style="left:28.4px;top:244.5px;width:36px;height:32px;border-radius:50%;background:radial-gradient(closest-side,rgba(40,30,30,.55),rgba(40,30,30,0))"></div><div style="left:30.799999999999997px;top:240.7px;width:29.3px;height:29.6px;border-radius:50%;background:linear-gradient(175deg,#f0f4f4 0%,#d4dcdd 40%,#a3b3b6 75%,#7d9195 100%);box-shadow:0 0 0 .6px rgba(70,80,80,.45)"></div><div style="left:34.2px;top:243.8px;width:22.4px;height:22.4px;border-radius:50%;background:radial-gradient(circle at 50% 30%,#2f7188,#28657b 60%,#1e5062 100%);box-shadow:0 0 0 .6px #5a7a80"></div><div style="left:44.699999999999996px;top:244.0px;width:1.4px;height:10.5px;background:#cdeed6"></div><div style="left:0px;top:282px;width:90px;height:3px;background:linear-gradient(#b0acac,#8e8a8a)"></div><div style="left:0px;top:285px;width:90px;height:2px;background:#050505"></div><div style="left:0px;top:287px;width:90px;height:29px;background:#383836"></div><div style="left:0px;top:287px;width:90px;height:2px;background:#42464c"></div><div style="left:0px;top:315px;width:90px;height:1px;background:#141414"></div><div style="left:89px;top:287px;width:1px;height:29px;background:#141414"></div><div style="left:3px;top:291px;width:84px;height:22px;background:#0e0c0a"></div><div style="left:4px;top:292px;width:82px;height:20px;background:radial-gradient(ellipse 40% 3px at 50% 0,rgba(255,235,200,.8),rgba(255,235,200,0)),linear-gradient(#b6a78c,#cbc0a6 25%,#d3c9b4 50%,#c6baa2 80%,#b3a68c)"></div><div style="left:0px;top:316px;width:90px;height:599px;background:linear-gradient(#262626 0,#353535 8px,#3a3a3a 16px,#3b3b3b)"></div><div style="left:0px;top:316px;width:1px;height:599px;background:#585858"></div><div style="left:89px;top:316px;width:1px;height:599px;background:#1e1e1e"></div><div style="left:14px;top:333px;width:8px;height:563px;background:#161616;border-radius:4px;box-shadow:0 -1px 0 #444"></div><div style="left:15.5px;top:336px;width:1px;height:557px;background:#3a3a3a"></div><div style="left:19.5px;top:336px;width:1px;height:557px;background:#2e2e2e"></div><div style="left:32px;top:333px;width:24px;height:563px;background:linear-gradient(#1f1f1f,#141414 40%,#050505 85%,#000)"></div><div style="left:56px;top:333px;width:1px;height:563px;background:#4c4c4c"></div><div style="left:32px;top:346px;width:24px;height:12px;color:#e2e2e2;font-size:9.5px;font-weight:bold;text-align:center;line-height:12px">-inf</div><div class="db" style="left:32px;top:365.6px;width:24px;height:8px;opacity:0.95">-0-</div><div class="db" style="left:32px;top:399px;width:24px;height:8px;opacity:0.88">-6-</div><div class="db" style="left:32px;top:433.8px;width:24px;height:8px;opacity:0.81">-12-</div><div class="db" style="left:32px;top:468px;width:24px;height:8px;opacity:0.74">-18-</div><div class="db" style="left:32px;top:502px;width:24px;height:8px;opacity:0.67">-24-</div><div class="db" style="left:32px;top:536px;width:24px;height:8px;opacity:0.60">-30-</div><div class="db" style="left:32px;top:571px;width:24px;height:8px;opacity:0.53">-36-</div><div class="db" style="left:32px;top:605.7px;width:24px;height:8px;opacity:0.46">-42-</div><div class="db" style="left:32px;top:639.5px;width:24px;height:8px;opacity:0.39">-48-</div><div class="db" style="left:32px;top:674px;width:24px;height:8px;opacity:0.32">-54-</div><div class="db" style="left:32px;top:709px;width:24px;height:8px;opacity:0.25">-60-</div><div class="db" style="left:32px;top:743px;width:24px;height:8px;opacity:0.25">-66-</div><div style="left:34px;top:886px;width:20px;height:1px;background:#454545"></div><div style="left:34px;top:887px;width:22px;height:8px;font-size:7.5px;font-weight:bold;line-height:8px;color:#6f6f6f;letter-spacing:.6px;text-indent:1px"><span style="color:#86a85a">M</span>SR</div><div class="btn" style="left:63px;top:343px;width:19px;height:14px;"><span class="bl">S</span></div><div class="btn" style="left:63px;top:365px;width:19px;height:14px;"><span class="bl">M</span></div><div class="btn" style="left:63px;top:387px;width:19px;height:14px;"><svg style="position:absolute;left:4px;top:1px" width="11" height="12" viewBox="0 0 11 12"><circle cx="5.5" cy="6" r="3.3" fill="none" stroke="#222" stroke-width="1.3"/><path d="M1.2 10.8L9.8 1.2" stroke="#222" stroke-width="1.2"/></svg></div><div class="btn" style="left:63px;top:603px;width:19px;height:14px;font-size:10.5px;letter-spacing:.2px"><span class="bl" style="transform:scaleX(1.12)">Fx</span></div><div style="left:67px;top:622px;width:11px;height:8px;border:1px solid #0a0a0a;background:#6e6e6e"></div><div class="btn" style="left:63px;top:879px;width:19px;height:14px;"><div style="left:5px;top:2px;width:10px;height:10px;border-radius:50%;border:2px solid #2a2a2a;background:#9a9a9a"></div></div><div style="left:5px;top:477px;width:25px;height:49px;background:radial-gradient(closest-side,rgba(0,0,0,.6),rgba(0,0,0,0))"></div><div style="left:8px;top:479px;width:19px;height:7px;background:linear-gradient(#dcdcdc,#f6f6f6 50%,#d4d4d4)"></div><div style="left:8px;top:486px;width:19px;height:1px;background:#2a2826"></div><div style="left:8px;top:487px;width:19px;height:13px;background:repeating-linear-gradient(#a6a29e 0,#a6a29e 1px,#75716d 1px,#75716d 2px)"></div><div style="left:8px;top:500px;width:19px;height:2px;background:#121212"></div><div style="left:8px;top:502px;width:19px;height:10px;background:repeating-linear-gradient(#b0b4b6 0,#b0b4b6 1px,#7e8284 1px,#7e8284 2px)"></div><div style="left:8px;top:512px;width:19px;height:4px;background:#d6d6d4"></div><div style="left:8px;top:516px;width:19px;height:1px;background:#f2f2f2"></div><div style="left:8px;top:517px;width:19px;height:6px;background:linear-gradient(#7c7c7c,#505050)"></div><div style="left:0px;top:915px;width:90px;height:2px;background:#0a0a0a"></div><div style="left:0px;top:917px;width:90px;height:25px;background:#1a1a1a"></div><div style="left:2px;top:920px;width:86px;height:19px;background:#111"></div><div style="left:3px;top:921px;width:84px;height:17px;background:linear-gradient(#777,#6a6a6a 50%,#5e5e5e)"></div><div style="left:9px;top:921px;width:40px;height:17px;font-family:'Liberation Serif',serif;font-weight:bold;font-size:12.5px;line-height:17px;color:#0a0a0a">7</div><div style="left:0px;top:942px;width:90px;height:1px;background:#7a7a7a"></div><div style="left:0px;top:943px;width:90px;height:22px;background:#2a2a2a"></div><div style="left:0px;top:942px;width:2px;height:34px;background:#6a6a6a"></div><div style="left:87px;top:942px;width:2px;height:34px;background:#6a6a6a"></div><div style="left:3px;top:944px;width:84px;height:20px;background:linear-gradient(#1c1c1c,#121212);border:1px solid #4a4a4a;border-top-color:#2a2a2a"></div><div style="left:2px;top:965px;width:85px;height:11px;background:linear-gradient(#3a3a3a,#454545)"></div><div style="left:0px;top:976px;width:90px;height:2px;background:#1b1e21"></div></div><div class="strip" style="left:334px"><div style="left:0px;top:0px;width:90px;height:3px;background:#333"></div><div style="left:0px;top:3px;width:90px;height:1px;background:#1a1a1a"></div><div style="left:0px;top:4px;width:90px;height:1px;background:#4a4a4a"></div><div style="left:0px;top:5px;width:90px;height:6px;background:#363636"></div><div style="left:0px;top:11px;width:90px;height:1px;background:#4c4c4c"></div><div style="left:0px;top:12px;width:90px;height:1px;background:#0d0d0d"></div><div style="left:0px;top:13px;width:90px;height:10px;background:linear-gradient(#171717,#212121)"></div><div style="left:0px;top:23px;width:90px;height:1px;background:#141414"></div><div style="left:0px;top:24px;width:90px;height:1px;background:#3a3a3a"></div><div style="left:0px;top:25px;width:90px;height:12px;background:#232323"></div><div style="left:0px;top:37px;width:90px;height:1px;background:#141414"></div><div style="left:0px;top:38px;width:90px;height:1px;background:#3a3a3a"></div><div style="left:0px;top:39px;width:90px;height:12px;background:#232323"></div><div style="left:0px;top:51px;width:90px;height:1px;background:#141414"></div><div style="left:0px;top:52px;width:90px;height:1px;background:#3a3a3a"></div><div style="left:0px;top:53px;width:90px;height:12px;background:#232323"></div><div style="left:0px;top:65px;width:90px;height:1px;background:#141414"></div><div style="left:0px;top:66px;width:90px;height:1px;background:#3a3a3a"></div><div style="left:0px;top:67px;width:90px;height:12px;background:#232323"></div><div style="left:0px;top:79px;width:90px;height:1px;background:#141414"></div><div style="left:0px;top:80px;width:90px;height:1px;background:#3a3a3a"></div><div style="left:0px;top:81px;width:90px;height:12px;background:#232323"></div><div style="left:0px;top:93px;width:90px;height:1px;background:#141414"></div><div style="left:0px;top:94px;width:90px;height:1px;background:#3a3a3a"></div><div style="left:0px;top:95px;width:90px;height:12px;background:#232323"></div><div style="left:0px;top:107px;width:90px;height:1px;background:#141414"></div><div style="left:0px;top:108px;width:90px;height:1px;background:#3a3a3a"></div><div style="left:0px;top:109px;width:90px;height:12px;background:#232323"></div><div style="left:0px;top:121px;width:90px;height:1px;background:#141414"></div><div style="left:0px;top:122px;width:90px;height:1px;background:#3a3a3a"></div><div style="left:0px;top:123px;width:90px;height:12px;background:#232323"></div><div style="left:0px;top:135px;width:90px;height:1px;background:#141414"></div><div style="left:0px;top:136px;width:90px;height:1px;background:#3a3a3a"></div><div style="left:0px;top:0px;width:1px;height:136px;background:#262626"></div><div style="left:1px;top:0px;width:1px;height:136px;background:#080808"></div><div style="left:89px;top:0px;width:1px;height:136px;background:#080808"></div><div style="left:0px;top:136px;width:90px;height:2px;background:#050505"></div><div style="left:0px;top:138px;width:90px;height:1px;background:#3a3a3a"></div><div style="left:0px;top:139px;width:90px;height:5px;background:#151515"></div><div style="left:0px;top:144px;width:90px;height:29px;background:linear-gradient(#5e5c5c,#bebcbc 4px,#dad8d8 8px,#dcdada 24px,#cfcdcd)"></div><div style="left:89px;top:144px;width:1px;height:29px;background:#0a0a0a"></div><div style="left:5px;top:149px;width:80px;height:18px;background:linear-gradient(#5c5858,#6a6767 30%,#747272);border-radius:2px;box-shadow:0 1px 0 #f4f4f4;font-weight:bold;font-size:10px;color:#050505;text-align:center;line-height:19px;letter-spacing:.2px">0.00</div><div style="left:0px;top:173px;width:90px;height:3px;background:linear-gradient(#9a9898,#b6b4b4)"></div><div style="left:0px;top:176px;width:90px;height:23px;background:#c4c2c2"></div><div style="left:4px;top:178px;width:82px;height:17px;border:1px solid #5e5a5a;border-radius:2px;background:#c2c0c0"></div><div style="left:12px;top:182px;width:49px;height:9px;background:#0c0c0c;color:#a8a8a8;font-size:7.5px;font-weight:bold;letter-spacing:1.9px;text-align:center;line-height:9px;text-indent:2px">ENV</div><div style="left:67px;top:182px;width:12px;height:9px;border:1px solid #050505;background:linear-gradient(#9a9a9a,#7c7c7c)"></div><div style="left:0px;top:199px;width:90px;height:3px;background:#050505"></div><div style="left:0px;top:202px;width:90px;height:1px;background:#444"></div><div style="left:0px;top:203px;width:90px;height:21px;background:#1a1a1a;color:#84a0a8;font-size:10.5px;text-align:center;line-height:22px;letter-spacing:.4px;text-shadow:0 0 2px #0a3038">center</div><div style="left:0px;top:224px;width:90px;height:2px;background:#050505"></div><div style="left:0px;top:226px;width:90px;height:2px;background:#5a5858"></div><div style="left:0px;top:228px;width:90px;height:54px;background:#c6c2c2"></div><div style="left:4px;top:232px;width:82px;height:48px;border:1px solid #4a4646;border-top:3px solid #4c4848;border-bottom:3px solid #4c4848;border-radius:2px;background:#c6c2c2"></div><div style="left:41.5px;top:234px;width:8px;height:4.5px;background:#4c4848;clip-path:polygon(0 0,100% 0,50% 100%)"></div><div style="left:29.799999999999997px;top:239.9px;width:3.2px;height:3.2px;background:#2e2828;border-radius:50%"></div><div style="left:57.8px;top:239.9px;width:3.2px;height:3.2px;background:#2e2828;border-radius:50%"></div><div style="left:24.099999999999998px;top:253.9px;width:3.2px;height:3.2px;background:#2e2828;border-radius:50%"></div><div style="left:63.4px;top:253.9px;width:3.2px;height:3.2px;background:#2e2828;border-radius:50%"></div><div style="left:29.799999999999997px;top:267.9px;width:3.2px;height:3.2px;background:#2e2828;border-radius:50%"></div><div style="left:57.8px;top:267.9px;width:3.2px;height:3.2px;background:#2e2828;border-radius:50%"></div><div style="left:28.4px;top:244.5px;width:36px;height:32px;border-radius:50%;background:radial-gradient(closest-side,rgba(40,30,30,.55),rgba(40,30,30,0))"></div><div style="left:30.799999999999997px;top:240.7px;width:29.3px;height:29.6px;border-radius:50%;background:linear-gradient(175deg,#f0f4f4 0%,#d4dcdd 40%,#a3b3b6 75%,#7d9195 100%);box-shadow:0 0 0 .6px rgba(70,80,80,.45)"></div><div style="left:34.2px;top:243.8px;width:22.4px;height:22.4px;border-radius:50%;background:radial-gradient(circle at 50% 30%,#2f7188,#28657b 60%,#1e5062 100%);box-shadow:0 0 0 .6px #5a7a80"></div><div style="left:44.699999999999996px;top:244.0px;width:1.4px;height:10.5px;background:#cdeed6"></div><div style="left:0px;top:282px;width:90px;height:3px;background:linear-gradient(#b0acac,#8e8a8a)"></div><div style="left:0px;top:285px;width:90px;height:2px;background:#050505"></div><div style="left:0px;top:287px;width:90px;height:29px;background:#383836"></div><div style="left:0px;top:287px;width:90px;height:2px;background:#42464c"></div><div style="left:0px;top:315px;width:90px;height:1px;background:#141414"></div><div style="left:89px;top:287px;width:1px;height:29px;background:#141414"></div><div style="left:3px;top:291px;width:84px;height:22px;background:#0e0c0a"></div><div style="left:4px;top:292px;width:82px;height:20px;background:radial-gradient(ellipse 40% 3px at 50% 0,rgba(255,235,200,.8),rgba(255,235,200,0)),linear-gradient(#b6a78c,#cbc0a6 25%,#d3c9b4 50%,#c6baa2 80%,#b3a68c)"></div><div style="left:0px;top:316px;width:90px;height:599px;background:linear-gradient(#262626 0,#353535 8px,#3a3a3a 16px,#3b3b3b)"></div><div style="left:0px;top:316px;width:1px;height:599px;background:#585858"></div><div style="left:89px;top:316px;width:1px;height:599px;background:#1e1e1e"></div><div style="left:14px;top:333px;width:8px;height:563px;background:#161616;border-radius:4px;box-shadow:0 -1px 0 #444"></div><div style="left:15.5px;top:336px;width:1px;height:557px;background:#3a3a3a"></div><div style="left:19.5px;top:336px;width:1px;height:557px;background:#2e2e2e"></div><div style="left:32px;top:333px;width:24px;height:563px;background:linear-gradient(#1f1f1f,#141414 40%,#050505 85%,#000)"></div><div style="left:56px;top:333px;width:1px;height:563px;background:#4c4c4c"></div><div style="left:32px;top:346px;width:24px;height:12px;color:#e2e2e2;font-size:9.5px;font-weight:bold;text-align:center;line-height:12px">-inf</div><div class="db" style="left:32px;top:365.6px;width:24px;height:8px;opacity:0.95">-0-</div><div class="db" style="left:32px;top:399px;width:24px;height:8px;opacity:0.88">-6-</div><div class="db" style="left:32px;top:433.8px;width:24px;height:8px;opacity:0.81">-12-</div><div class="db" style="left:32px;top:468px;width:24px;height:8px;opacity:0.74">-18-</div><div class="db" style="left:32px;top:502px;width:24px;height:8px;opacity:0.67">-24-</div><div class="db" style="left:32px;top:536px;width:24px;height:8px;opacity:0.60">-30-</div><div class="db" style="left:32px;top:571px;width:24px;height:8px;opacity:0.53">-36-</div><div class="db" style="left:32px;top:605.7px;width:24px;height:8px;opacity:0.46">-42-</div><div class="db" style="left:32px;top:639.5px;width:24px;height:8px;opacity:0.39">-48-</div><div class="db" style="left:32px;top:674px;width:24px;height:8px;opacity:0.32">-54-</div><div class="db" style="left:32px;top:709px;width:24px;height:8px;opacity:0.25">-60-</div><div class="db" style="left:32px;top:743px;width:24px;height:8px;opacity:0.25">-66-</div><div style="left:34px;top:886px;width:20px;height:1px;background:#454545"></div><div style="left:34px;top:887px;width:22px;height:8px;font-size:7.5px;font-weight:bold;line-height:8px;color:#6f6f6f;letter-spacing:.6px;text-indent:1px"><span style="color:#86a85a">M</span>SR</div><div class="btn" style="left:63px;top:343px;width:19px;height:14px;"><span class="bl">S</span></div><div class="btn" style="left:63px;top:365px;width:19px;height:14px;"><span class="bl">M</span></div><div class="btn" style="left:63px;top:387px;width:19px;height:14px;"><svg style="position:absolute;left:4px;top:1px" width="11" height="12" viewBox="0 0 11 12"><circle cx="5.5" cy="6" r="3.3" fill="none" stroke="#222" stroke-width="1.3"/><path d="M1.2 10.8L9.8 1.2" stroke="#222" stroke-width="1.2"/></svg></div><div class="btn" style="left:63px;top:603px;width:19px;height:14px;font-size:10.5px;letter-spacing:.2px"><span class="bl" style="transform:scaleX(1.12)">Fx</span></div><div style="left:67px;top:622px;width:11px;height:8px;border:1px solid #0a0a0a;background:#6e6e6e"></div><div class="btn" style="left:63px;top:879px;width:19px;height:14px;"><div style="left:5px;top:2px;width:10px;height:10px;border-radius:50%;border:2px solid #2a2a2a;background:#9a9a9a"></div></div><div style="left:5px;top:477px;width:25px;height:49px;background:radial-gradient(closest-side,rgba(0,0,0,.6),rgba(0,0,0,0))"></div><div style="left:8px;top:479px;width:19px;height:7px;background:linear-gradient(#dcdcdc,#f6f6f6 50%,#d4d4d4)"></div><div style="left:8px;top:486px;width:19px;height:1px;background:#2a2826"></div><div style="left:8px;top:487px;width:19px;height:13px;background:repeating-linear-gradient(#a6a29e 0,#a6a29e 1px,#75716d 1px,#75716d 2px)"></div><div style="left:8px;top:500px;width:19px;height:2px;background:#121212"></div><div style="left:8px;top:502px;width:19px;height:10px;background:repeating-linear-gradient(#b0b4b6 0,#b0b4b6 1px,#7e8284 1px,#7e8284 2px)"></div><div style="left:8px;top:512px;width:19px;height:4px;background:#d6d6d4"></div><div style="left:8px;top:516px;width:19px;height:1px;background:#f2f2f2"></div><div style="left:8px;top:517px;width:19px;height:6px;background:linear-gradient(#7c7c7c,#505050)"></div><div style="left:0px;top:915px;width:90px;height:2px;background:#0a0a0a"></div><div style="left:0px;top:917px;width:90px;height:25px;background:#1a1a1a"></div><div style="left:2px;top:920px;width:86px;height:19px;background:#111"></div><div style="left:3px;top:921px;width:84px;height:17px;background:linear-gradient(#777,#6a6a6a 50%,#5e5e5e)"></div><div style="left:9px;top:921px;width:40px;height:17px;font-family:'Liberation Serif',serif;font-weight:bold;font-size:12.5px;line-height:17px;color:#0a0a0a">8</div><div style="left:0px;top:942px;width:90px;height:1px;background:#7a7a7a"></div><div style="left:0px;top:943px;width:90px;height:22px;background:#2a2a2a"></div><div style="left:0px;top:942px;width:2px;height:34px;background:#6a6a6a"></div><div style="left:87px;top:942px;width:2px;height:34px;background:#6a6a6a"></div><div style="left:3px;top:944px;width:84px;height:20px;background:linear-gradient(#1c1c1c,#121212);border:1px solid #4a4a4a;border-top-color:#2a2a2a"></div><div style="left:2px;top:965px;width:85px;height:11px;background:linear-gradient(#3a3a3a,#454545)"></div><div style="left:0px;top:976px;width:90px;height:2px;background:#1b1e21"></div></div><div class="strip" style="left:424px"><div style="left:0px;top:0px;width:90px;height:3px;background:#333"></div><div style="left:0px;top:3px;width:90px;height:1px;background:#1a1a1a"></div><div style="left:0px;top:4px;width:90px;height:1px;background:#4a4a4a"></div><div style="left:0px;top:5px;width:90px;height:6px;background:#363636"></div><div style="left:0px;top:11px;width:90px;height:1px;background:#4c4c4c"></div><div style="left:0px;top:12px;width:90px;height:1px;background:#0d0d0d"></div><div style="left:0px;top:13px;width:90px;height:10px;background:linear-gradient(#171717,#212121)"></div><div style="left:0px;top:23px;width:90px;height:1px;background:#141414"></div><div style="left:0px;top:24px;width:90px;height:1px;background:#3a3a3a"></div><div style="left:0px;top:25px;width:90px;height:12px;background:#232323"></div><div style="left:0px;top:37px;width:90px;height:1px;background:#141414"></div><div style="left:0px;top:38px;width:90px;height:1px;background:#3a3a3a"></div><div style="left:0px;top:39px;width:90px;height:12px;background:#232323"></div><div style="left:0px;top:51px;width:90px;height:1px;background:#141414"></div><div style="left:0px;top:52px;width:90px;height:1px;background:#3a3a3a"></div><div style="left:0px;top:53px;width:90px;height:12px;background:#232323"></div><div style="left:0px;top:65px;width:90px;height:1px;background:#141414"></div><div style="left:0px;top:66px;width:90px;height:1px;background:#3a3a3a"></div><div style="left:0px;top:67px;width:90px;height:12px;background:#232323"></div><div style="left:0px;top:79px;width:90px;height:1px;background:#141414"></div><div style="left:0px;top:80px;width:90px;height:1px;background:#3a3a3a"></div><div style="left:0px;top:81px;width:90px;height:12px;background:#232323"></div><div style="left:0px;top:93px;width:90px;height:1px;background:#141414"></div><div style="left:0px;top:94px;width:90px;height:1px;background:#3a3a3a"></div><div style="left:0px;top:95px;width:90px;height:12px;background:#232323"></div><div style="left:0px;top:107px;width:90px;height:1px;background:#141414"></div><div style="left:0px;top:108px;width:90px;height:1px;background:#3a3a3a"></div><div style="left:0px;top:109px;width:90px;height:12px;background:#232323"></div><div style="left:0px;top:121px;width:90px;height:1px;background:#141414"></div><div style="left:0px;top:122px;width:90px;height:1px;background:#3a3a3a"></div><div style="left:0px;top:123px;width:90px;height:12px;background:#232323"></div><div style="left:0px;top:135px;width:90px;height:1px;background:#141414"></div><div style="left:0px;top:136px;width:90px;height:1px;background:#3a3a3a"></div><div style="left:0px;top:0px;width:1px;height:136px;background:#262626"></div><div style="left:1px;top:0px;width:1px;height:136px;background:#080808"></div><div style="left:89px;top:0px;width:1px;height:136px;background:#080808"></div><div style="left:0px;top:136px;width:90px;height:2px;background:#050505"></div><div style="left:0px;top:138px;width:90px;height:1px;background:#3a3a3a"></div><div style="left:0px;top:139px;width:90px;height:5px;background:#151515"></div><div style="left:0px;top:144px;width:90px;height:29px;background:linear-gradient(#5e5c5c,#bebcbc 4px,#dad8d8 8px,#dcdada 24px,#cfcdcd)"></div><div style="left:89px;top:144px;width:1px;height:29px;background:#0a0a0a"></div><div style="left:5px;top:149px;width:80px;height:18px;background:linear-gradient(#5c5858,#6a6767 30%,#747272);border-radius:2px;box-shadow:0 1px 0 #f4f4f4;font-weight:bold;font-size:10px;color:#050505;text-align:center;line-height:19px;letter-spacing:.2px">0.00</div><div style="left:0px;top:173px;width:90px;height:3px;background:linear-gradient(#9a9898,#b6b4b4)"></div><div style="left:0px;top:176px;width:90px;height:23px;background:#c4c2c2"></div><div style="left:4px;top:178px;width:82px;height:17px;border:1px solid #5e5a5a;border-radius:2px;background:#c2c0c0"></div><div style="left:12px;top:182px;width:49px;height:9px;background:#0c0c0c;color:#a8a8a8;font-size:7.5px;font-weight:bold;letter-spacing:1.9px;text-align:center;line-height:9px;text-indent:2px">ENV</div><div style="left:67px;top:182px;width:12px;height:9px;border:1px solid #050505;background:linear-gradient(#9a9a9a,#7c7c7c)"></div><div style="left:0px;top:199px;width:90px;height:3px;background:#050505"></div><div style="left:0px;top:202px;width:90px;height:1px;background:#444"></div><div style="left:0px;top:203px;width:90px;height:21px;background:#1a1a1a;color:#84a0a8;font-size:10.5px;text-align:center;line-height:22px;letter-spacing:.4px;text-shadow:0 0 2px #0a3038">center</div><div style="left:0px;top:224px;width:90px;height:2px;background:#050505"></div><div style="left:0px;top:226px;width:90px;height:2px;background:#5a5858"></div><div style="left:0px;top:228px;width:90px;height:54px;background:#c6c2c2"></div><div style="left:4px;top:232px;width:82px;height:48px;border:1px solid #4a4646;border-top:3px solid #4c4848;border-bottom:3px solid #4c4848;border-radius:2px;background:#c6c2c2"></div><div style="left:41.5px;top:234px;width:8px;height:4.5px;background:#4c4848;clip-path:polygon(0 0,100% 0,50% 100%)"></div><div style="left:29.799999999999997px;top:239.9px;width:3.2px;height:3.2px;background:#2e2828;border-radius:50%"></div><div style="left:57.8px;top:239.9px;width:3.2px;height:3.2px;background:#2e2828;border-radius:50%"></div><div style="left:24.099999999999998px;top:253.9px;width:3.2px;height:3.2px;background:#2e2828;border-radius:50%"></div><div style="left:63.4px;top:253.9px;width:3.2px;height:3.2px;background:#2e2828;border-radius:50%"></div><div style="left:29.799999999999997px;top:267.9px;width:3.2px;height:3.2px;background:#2e2828;border-radius:50%"></div><div style="left:57.8px;top:267.9px;width:3.2px;height:3.2px;background:#2e2828;border-radius:50%"></div><div style="left:28.4px;top:244.5px;width:36px;height:32px;border-radius:50%;background:radial-gradient(closest-side,rgba(40,30,30,.55),rgba(40,30,30,0))"></div><div style="left:30.799999999999997px;top:240.7px;width:29.3px;height:29.6px;border-radius:50%;background:linear-gradient(175deg,#f0f4f4 0%,#d4dcdd 40%,#a3b3b6 75%,#7d9195 100%);box-shadow:0 0 0 .6px rgba(70,80,80,.45)"></div><div style="left:34.2px;top:243.8px;width:22.4px;height:22.4px;border-radius:50%;background:radial-gradient(circle at 50% 30%,#2f7188,#28657b 60%,#1e5062 100%);box-shadow:0 0 0 .6px #5a7a80"></div><div style="left:44.699999999999996px;top:244.0px;width:1.4px;height:10.5px;background:#cdeed6"></div><div style="left:0px;top:282px;width:90px;height:3px;background:linear-gradient(#b0acac,#8e8a8a)"></div><div style="left:0px;top:285px;width:90px;height:2px;background:#050505"></div><div style="left:0px;top:287px;width:90px;height:29px;background:#383836"></div><div style="left:0px;top:287px;width:90px;height:2px;background:#42464c"></div><div style="left:0px;top:315px;width:90px;height:1px;background:#141414"></div><div style="left:89px;top:287px;width:1px;height:29px;background:#141414"></div><div style="left:3px;top:291px;width:84px;height:22px;background:#0e0c0a"></div><div style="left:4px;top:292px;width:82px;height:20px;background:radial-gradient(ellipse 40% 3px at 50% 0,rgba(255,235,200,.8),rgba(255,235,200,0)),linear-gradient(#b6a78c,#cbc0a6 25%,#d3c9b4 50%,#c6baa2 80%,#b3a68c)"></div><div style="left:0px;top:316px;width:90px;height:599px;background:linear-gradient(#262626 0,#353535 8px,#3a3a3a 16px,#3b3b3b)"></div><div style="left:0px;top:316px;width:1px;height:599px;background:#585858"></div><div style="left:89px;top:316px;width:1px;height:599px;background:#1e1e1e"></div><div style="left:14px;top:333px;width:8px;height:563px;background:#161616;border-radius:4px;box-shadow:0 -1px 0 #444"></div><div style="left:15.5px;top:336px;width:1px;height:557px;background:#3a3a3a"></div><div style="left:19.5px;top:336px;width:1px;height:557px;background:#2e2e2e"></div><div style="left:32px;top:333px;width:24px;height:563px;background:linear-gradient(#1f1f1f,#141414 40%,#050505 85%,#000)"></div><div style="left:56px;top:333px;width:1px;height:563px;background:#4c4c4c"></div><div style="left:32px;top:346px;width:24px;height:12px;color:#e2e2e2;font-size:9.5px;font-weight:bold;text-align:center;line-height:12px">-inf</div><div class="db" style="left:32px;top:365.6px;width:24px;height:8px;opacity:0.95">-0-</div><div class="db" style="left:32px;top:399px;width:24px;height:8px;opacity:0.88">-6-</div><div class="db" style="left:32px;top:433.8px;width:24px;height:8px;opacity:0.81">-12-</div><div class="db" style="left:32px;top:468px;width:24px;height:8px;opacity:0.74">-18-</div><div class="db" style="left:32px;top:502px;width:24px;height:8px;opacity:0.67">-24-</div><div class="db" style="left:32px;top:536px;width:24px;height:8px;opacity:0.60">-30-</div><div class="db" style="left:32px;top:571px;width:24px;height:8px;opacity:0.53">-36-</div><div class="db" style="left:32px;top:605.7px;width:24px;height:8px;opacity:0.46">-42-</div><div class="db" style="left:32px;top:639.5px;width:24px;height:8px;opacity:0.39">-48-</div><div class="db" style="left:32px;top:674px;width:24px;height:8px;opacity:0.32">-54-</div><div class="db" style="left:32px;top:709px;width:24px;height:8px;opacity:0.25">-60-</div><div class="db" style="left:32px;top:743px;width:24px;height:8px;opacity:0.25">-66-</div><div style="left:34px;top:886px;width:20px;height:1px;background:#454545"></div><div style="left:34px;top:887px;width:22px;height:8px;font-size:7.5px;font-weight:bold;line-height:8px;color:#6f6f6f;letter-spacing:.6px;text-indent:1px"><span style="color:#86a85a">M</span>SR</div><div class="btn" style="left:63px;top:343px;width:19px;height:14px;"><span class="bl">S</span></div><div class="btn" style="left:63px;top:365px;width:19px;height:14px;"><span class="bl">M</span></div><div class="btn" style="left:63px;top:387px;width:19px;height:14px;"><svg style="position:absolute;left:4px;top:1px" width="11" height="12" viewBox="0 0 11 12"><circle cx="5.5" cy="6" r="3.3" fill="none" stroke="#222" stroke-width="1.3"/><path d="M1.2 10.8L9.8 1.2" stroke="#222" stroke-width="1.2"/></svg></div><div class="btn" style="left:63px;top:603px;width:19px;height:14px;font-size:10.5px;letter-spacing:.2px"><span class="bl" style="transform:scaleX(1.12)">Fx</span></div><div style="left:67px;top:622px;width:11px;height:8px;border:1px solid #0a0a0a;background:#6e6e6e"></div><div class="btn" style="left:63px;top:879px;width:19px;height:14px;"><div style="left:5px;top:2px;width:10px;height:10px;border-radius:50%;border:2px solid #2a2a2a;background:#9a9a9a"></div></div><div style="left:5px;top:477px;width:25px;height:49px;background:radial-gradient(closest-side,rgba(0,0,0,.6),rgba(0,0,0,0))"></div><div style="left:8px;top:479px;width:19px;height:7px;background:linear-gradient(#dcdcdc,#f6f6f6 50%,#d4d4d4)"></div><div style="left:8px;top:486px;width:19px;height:1px;background:#2a2826"></div><div style="left:8px;top:487px;width:19px;height:13px;background:repeating-linear-gradient(#a6a29e 0,#a6a29e 1px,#75716d 1px,#75716d 2px)"></div><div style="left:8px;top:500px;width:19px;height:2px;background:#121212"></div><div style="left:8px;top:502px;width:19px;height:10px;background:repeating-linear-gradient(#b0b4b6 0,#b0b4b6 1px,#7e8284 1px,#7e8284 2px)"></div><div style="left:8px;top:512px;width:19px;height:4px;background:#d6d6d4"></div><div style="left:8px;top:516px;width:19px;height:1px;background:#f2f2f2"></div><div style="left:8px;top:517px;width:19px;height:6px;background:linear-gradient(#7c7c7c,#505050)"></div><div style="left:0px;top:915px;width:90px;height:2px;background:#0a0a0a"></div><div style="left:0px;top:917px;width:90px;height:25px;background:#1a1a1a"></div><div style="left:2px;top:920px;width:86px;height:19px;background:#111"></div><div style="left:3px;top:921px;width:84px;height:17px;background:linear-gradient(#777,#6a6a6a 50%,#5e5e5e)"></div><div style="left:9px;top:921px;width:40px;height:17px;font-family:'Liberation Serif',serif;font-weight:bold;font-size:12.5px;line-height:17px;color:#0a0a0a">9</div><div style="left:0px;top:942px;width:90px;height:1px;background:#7a7a7a"></div><div style="left:0px;top:943px;width:90px;height:22px;background:#2a2a2a"></div><div style="left:0px;top:942px;width:2px;height:34px;background:#6a6a6a"></div><div style="left:87px;top:942px;width:2px;height:34px;background:#6a6a6a"></div><div style="left:3px;top:944px;width:84px;height:20px;background:linear-gradient(#1c1c1c,#121212);border:1px solid #4a4a4a;border-top-color:#2a2a2a"></div><div style="left:2px;top:965px;width:85px;height:11px;background:linear-gradient(#3a3a3a,#454545)"></div><div style="left:0px;top:976px;width:90px;height:2px;background:#1b1e21"></div></div><div class="strip" style="left:514px"><div style="left:0px;top:0px;width:90px;height:3px;background:#333"></div><div style="left:0px;top:3px;width:90px;height:1px;background:#1a1a1a"></div><div style="left:0px;top:4px;width:90px;height:1px;background:#4a4a4a"></div><div style="left:0px;top:5px;width:90px;height:6px;background:#363636"></div><div style="left:0px;top:11px;width:90px;height:1px;background:#4c4c4c"></div><div style="left:0px;top:12px;width:90px;height:1px;background:#0d0d0d"></div><div style="left:0px;top:13px;width:90px;height:10px;background:linear-gradient(#171717,#212121)"></div><div style="left:0px;top:23px;width:90px;height:1px;background:#141414"></div><div style="left:0px;top:24px;width:90px;height:1px;background:#3a3a3a"></div><div style="left:0px;top:25px;width:90px;height:12px;background:#232323"></div><div style="left:0px;top:37px;width:90px;height:1px;background:#141414"></div><div style="left:0px;top:38px;width:90px;height:1px;background:#3a3a3a"></div><div style="left:0px;top:39px;width:90px;height:12px;background:#232323"></div><div style="left:0px;top:51px;width:90px;height:1px;background:#141414"></div><div style="left:0px;top:52px;width:90px;height:1px;background:#3a3a3a"></div><div style="left:0px;top:53px;width:90px;height:12px;background:#232323"></div><div style="left:0px;top:65px;width:90px;height:1px;background:#141414"></div><div style="left:0px;top:66px;width:90px;height:1px;background:#3a3a3a"></div><div style="left:0px;top:67px;width:90px;height:12px;background:#232323"></div><div style="left:0px;top:79px;width:90px;height:1px;background:#141414"></div><div style="left:0px;top:80px;width:90px;height:1px;background:#3a3a3a"></div><div style="left:0px;top:81px;width:90px;height:12px;background:#232323"></div><div style="left:0px;top:93px;width:90px;height:1px;background:#141414"></div><div style="left:0px;top:94px;width:90px;height:1px;background:#3a3a3a"></div><div style="left:0px;top:95px;width:90px;height:12px;background:#232323"></div><div style="left:0px;top:107px;width:90px;height:1px;background:#141414"></div><div style="left:0px;top:108px;width:90px;height:1px;background:#3a3a3a"></div><div style="left:0px;top:109px;width:90px;height:12px;background:#232323"></div><div style="left:0px;top:121px;width:90px;height:1px;background:#141414"></div><div style="left:0px;top:122px;width:90px;height:1px;background:#3a3a3a"></div><div style="left:0px;top:123px;width:90px;height:12px;background:#232323"></div><div style="left:0px;top:135px;width:90px;height:1px;background:#141414"></div><div style="left:0px;top:136px;width:90px;height:1px;background:#3a3a3a"></div><div style="left:0px;top:0px;width:1px;height:136px;background:#262626"></div><div style="left:1px;top:0px;width:1px;height:136px;background:#080808"></div><div style="left:89px;top:0px;width:1px;height:136px;background:#080808"></div><div style="left:0px;top:136px;width:90px;height:2px;background:#050505"></div><div style="left:0px;top:138px;width:90px;height:1px;background:#3a3a3a"></div><div style="left:0px;top:139px;width:90px;height:5px;background:#151515"></div><div style="left:0px;top:144px;width:90px;height:29px;background:linear-gradient(#5e5c5c,#bebcbc 4px,#dad8d8 8px,#dcdada 24px,#cfcdcd)"></div><div style="left:89px;top:144px;width:1px;height:29px;background:#0a0a0a"></div><div style="left:5px;top:149px;width:80px;height:18px;background:linear-gradient(#5c5858,#6a6767 30%,#747272);border-radius:2px;box-shadow:0 1px 0 #f4f4f4;font-weight:bold;font-size:10px;color:#050505;text-align:center;line-height:19px;letter-spacing:.2px">0.00</div><div style="left:0px;top:173px;width:90px;height:3px;background:linear-gradient(#9a9898,#b6b4b4)"></div><div style="left:0px;top:176px;width:90px;height:23px;background:#c4c2c2"></div><div style="left:4px;top:178px;width:82px;height:17px;border:1px solid #5e5a5a;border-radius:2px;background:#c2c0c0"></div><div style="left:12px;top:182px;width:49px;height:9px;background:#0c0c0c;color:#a8a8a8;font-size:7.5px;font-weight:bold;letter-spacing:1.9px;text-align:center;line-height:9px;text-indent:2px">ENV</div><div style="left:67px;top:182px;width:12px;height:9px;border:1px solid #050505;background:linear-gradient(#9a9a9a,#7c7c7c)"></div><div style="left:0px;top:199px;width:90px;height:3px;background:#050505"></div><div style="left:0px;top:202px;width:90px;height:1px;background:#444"></div><div style="left:0px;top:203px;width:90px;height:21px;background:#1a1a1a;color:#84a0a8;font-size:10.5px;text-align:center;line-height:22px;letter-spacing:.4px;text-shadow:0 0 2px #0a3038">center</div><div style="left:0px;top:224px;width:90px;height:2px;background:#050505"></div><div style="left:0px;top:226px;width:90px;height:2px;background:#5a5858"></div><div style="left:0px;top:228px;width:90px;height:54px;background:#c6c2c2"></div><div style="left:4px;top:232px;width:82px;height:48px;border:1px solid #4a4646;border-top:3px solid #4c4848;border-bottom:3px solid #4c4848;border-radius:2px;background:#c6c2c2"></div><div style="left:41.5px;top:234px;width:8px;height:4.5px;background:#4c4848;clip-path:polygon(0 0,100% 0,50% 100%)"></div><div style="left:29.799999999999997px;top:239.9px;width:3.2px;height:3.2px;background:#2e2828;border-radius:50%"></div><div style="left:57.8px;top:239.9px;width:3.2px;height:3.2px;background:#2e2828;border-radius:50%"></div><div style="left:24.099999999999998px;top:253.9px;width:3.2px;height:3.2px;background:#2e2828;border-radius:50%"></div><div style="left:63.4px;top:253.9px;width:3.2px;height:3.2px;background:#2e2828;border-radius:50%"></div><div style="left:29.799999999999997px;top:267.9px;width:3.2px;height:3.2px;background:#2e2828;border-radius:50%"></div><div style="left:57.8px;top:267.9px;width:3.2px;height:3.2px;background:#2e2828;border-radius:50%"></div><div style="left:28.4px;top:244.5px;width:36px;height:32px;border-radius:50%;background:radial-gradient(closest-side,rgba(40,30,30,.55),rgba(40,30,30,0))"></div><div style="left:30.799999999999997px;top:240.7px;width:29.3px;height:29.6px;border-radius:50%;background:linear-gradient(175deg,#f0f4f4 0%,#d4dcdd 40%,#a3b3b6 75%,#7d9195 100%);box-shadow:0 0 0 .6px rgba(70,80,80,.45)"></div><div style="left:34.2px;top:243.8px;width:22.4px;height:22.4px;border-radius:50%;background:radial-gradient(circle at 50% 30%,#2f7188,#28657b 60%,#1e5062 100%);box-shadow:0 0 0 .6px #5a7a80"></div><div style="left:44.699999999999996px;top:244.0px;width:1.4px;height:10.5px;background:#cdeed6"></div><div style="left:0px;top:282px;width:90px;height:3px;background:linear-gradient(#b0acac,#8e8a8a)"></div><div style="left:0px;top:285px;width:90px;height:2px;background:#050505"></div><div style="left:0px;top:287px;width:90px;height:29px;background:#383836"></div><div style="left:0px;top:287px;width:90px;height:2px;background:#42464c"></div><div style="left:0px;top:315px;width:90px;height:1px;background:#141414"></div><div style="left:89px;top:287px;width:1px;height:29px;background:#141414"></div><div style="left:3px;top:291px;width:84px;height:22px;background:#0e0c0a"></div><div style="left:4px;top:292px;width:82px;height:20px;background:radial-gradient(ellipse 40% 3px at 50% 0,rgba(255,235,200,.8),rgba(255,235,200,0)),linear-gradient(#b6a78c,#cbc0a6 25%,#d3c9b4 50%,#c6baa2 80%,#b3a68c)"></div><div style="left:0px;top:316px;width:90px;height:599px;background:linear-gradient(#262626 0,#353535 8px,#3a3a3a 16px,#3b3b3b)"></div><div style="left:0px;top:316px;width:1px;height:599px;background:#585858"></div><div style="left:89px;top:316px;width:1px;height:599px;background:#1e1e1e"></div><div style="left:14px;top:333px;width:8px;height:563px;background:#161616;border-radius:4px;box-shadow:0 -1px 0 #444"></div><div style="left:15.5px;top:336px;width:1px;height:557px;background:#3a3a3a"></div><div style="left:19.5px;top:336px;width:1px;height:557px;background:#2e2e2e"></div><div style="left:32px;top:333px;width:24px;height:563px;background:linear-gradient(#1f1f1f,#141414 40%,#050505 85%,#000)"></div><div style="left:56px;top:333px;width:1px;height:563px;background:#4c4c4c"></div><div style="left:32px;top:346px;width:24px;height:12px;color:#e2e2e2;font-size:9.5px;font-weight:bold;text-align:center;line-height:12px">-inf</div><div class="db" style="left:32px;top:365.6px;width:24px;height:8px;opacity:0.95">-0-</div><div class="db" style="left:32px;top:399px;width:24px;height:8px;opacity:0.88">-6-</div><div class="db" style="left:32px;top:433.8px;width:24px;height:8px;opacity:0.81">-12-</div><div class="db" style="left:32px;top:468px;width:24px;height:8px;opacity:0.74">-18-</div><div class="db" style="left:32px;top:502px;width:24px;height:8px;opacity:0.67">-24-</div><div class="db" style="left:32px;top:536px;width:24px;height:8px;opacity:0.60">-30-</div><div class="db" style="left:32px;top:571px;width:24px;height:8px;opacity:0.53">-36-</div><div class="db" style="left:32px;top:605.7px;width:24px;height:8px;opacity:0.46">-42-</div><div class="db" style="left:32px;top:639.5px;width:24px;height:8px;opacity:0.39">-48-</div><div class="db" style="left:32px;top:674px;width:24px;height:8px;opacity:0.32">-54-</div><div class="db" style="left:32px;top:709px;width:24px;height:8px;opacity:0.25">-60-</div><div class="db" style="left:32px;top:743px;width:24px;height:8px;opacity:0.25">-66-</div><div style="left:34px;top:886px;width:20px;height:1px;background:#454545"></div><div style="left:34px;top:887px;width:22px;height:8px;font-size:7.5px;font-weight:bold;line-height:8px;color:#6f6f6f;letter-spacing:.6px;text-indent:1px"><span style="color:#86a85a">M</span>SR</div><div class="btn" style="left:63px;top:343px;width:19px;height:14px;"><span class="bl">S</span></div><div class="btn" style="left:63px;top:365px;width:19px;height:14px;"><span class="bl">M</span></div><div class="btn" style="left:63px;top:387px;width:19px;height:14px;"><svg style="position:absolute;left:4px;top:1px" width="11" height="12" viewBox="0 0 11 12"><circle cx="5.5" cy="6" r="3.3" fill="none" stroke="#222" stroke-width="1.3"/><path d="M1.2 10.8L9.8 1.2" stroke="#222" stroke-width="1.2"/></svg></div><div class="btn" style="left:63px;top:603px;width:19px;height:14px;font-size:10.5px;letter-spacing:.2px"><span class="bl" style="transform:scaleX(1.12)">Fx</span></div><div style="left:67px;top:622px;width:11px;height:8px;border:1px solid #0a0a0a;background:#6e6e6e"></div><div class="btn" style="left:63px;top:879px;width:19px;height:14px;"><div style="left:5px;top:2px;width:10px;height:10px;border-radius:50%;border:2px solid #2a2a2a;background:#9a9a9a"></div></div><div style="left:5px;top:477px;width:25px;height:49px;background:radial-gradient(closest-side,rgba(0,0,0,.6),rgba(0,0,0,0))"></div><div style="left:8px;top:479px;width:19px;height:7px;background:linear-gradient(#dcdcdc,#f6f6f6 50%,#d4d4d4)"></div><div style="left:8px;top:486px;width:19px;height:1px;background:#2a2826"></div><div style="left:8px;top:487px;width:19px;height:13px;background:repeating-linear-gradient(#a6a29e 0,#a6a29e 1px,#75716d 1px,#75716d 2px)"></div><div style="left:8px;top:500px;width:19px;height:2px;background:#121212"></div><div style="left:8px;top:502px;width:19px;height:10px;background:repeating-linear-gradient(#b0b4b6 0,#b0b4b6 1px,#7e8284 1px,#7e8284 2px)"></div><div style="left:8px;top:512px;width:19px;height:4px;background:#d6d6d4"></div><div style="left:8px;top:516px;width:19px;height:1px;background:#f2f2f2"></div><div style="left:8px;top:517px;width:19px;height:6px;background:linear-gradient(#7c7c7c,#505050)"></div><div style="left:0px;top:915px;width:90px;height:2px;background:#0a0a0a"></div><div style="left:0px;top:917px;width:90px;height:25px;background:#1a1a1a"></div><div style="left:2px;top:920px;width:86px;height:19px;background:#111"></div><div style="left:3px;top:921px;width:84px;height:17px;background:linear-gradient(#777,#6a6a6a 50%,#5e5e5e)"></div><div style="left:9px;top:921px;width:40px;height:17px;font-family:'Liberation Serif',serif;font-weight:bold;font-size:12.5px;line-height:17px;color:#0a0a0a">10</div><div style="left:0px;top:942px;width:90px;height:1px;background:#7a7a7a"></div><div style="left:0px;top:943px;width:90px;height:22px;background:#2a2a2a"></div><div style="left:0px;top:942px;width:2px;height:34px;background:#6a6a6a"></div><div style="left:87px;top:942px;width:2px;height:34px;background:#6a6a6a"></div><div style="left:3px;top:944px;width:84px;height:20px;background:linear-gradient(#1c1c1c,#121212);border:1px solid #4a4a4a;border-top-color:#2a2a2a"></div><div style="left:2px;top:965px;width:85px;height:11px;background:linear-gradient(#3a3a3a,#454545)"></div><div style="left:0px;top:976px;width:90px;height:2px;background:#1b1e21"></div></div><div class="strip" style="left:604px"><div style="left:0px;top:0px;width:90px;height:3px;background:#333"></div><div style="left:0px;top:3px;width:90px;height:1px;background:#1a1a1a"></div><div style="left:0px;top:4px;width:90px;height:1px;background:#4a4a4a"></div><div style="left:0px;top:5px;width:90px;height:6px;background:#363636"></div><div style="left:0px;top:11px;width:90px;height:1px;background:#4c4c4c"></div><div style="left:0px;top:12px;width:90px;height:1px;background:#0d0d0d"></div><div style="left:0px;top:13px;width:90px;height:10px;background:linear-gradient(#171717,#212121)"></div><div style="left:0px;top:23px;width:90px;height:1px;background:#141414"></div><div style="left:0px;top:24px;width:90px;height:1px;background:#3a3a3a"></div><div style="left:0px;top:25px;width:90px;height:12px;background:#232323"></div><div style="left:0px;top:37px;width:90px;height:1px;background:#141414"></div><div style="left:0px;top:38px;width:90px;height:1px;background:#3a3a3a"></div><div style="left:0px;top:39px;width:90px;height:12px;background:#232323"></div><div style="left:0px;top:51px;width:90px;height:1px;background:#141414"></div><div style="left:0px;top:52px;width:90px;height:1px;background:#3a3a3a"></div><div style="left:0px;top:53px;width:90px;height:12px;background:#232323"></div><div style="left:0px;top:65px;width:90px;height:1px;background:#141414"></div><div style="left:0px;top:66px;width:90px;height:1px;background:#3a3a3a"></div><div style="left:0px;top:67px;width:90px;height:12px;background:#232323"></div><div style="left:0px;top:79px;width:90px;height:1px;background:#141414"></div><div style="left:0px;top:80px;width:90px;height:1px;background:#3a3a3a"></div><div style="left:0px;top:81px;width:90px;height:12px;background:#232323"></div><div style="left:0px;top:93px;width:90px;height:1px;background:#141414"></div><div style="left:0px;top:94px;width:90px;height:1px;background:#3a3a3a"></div><div style="left:0px;top:95px;width:90px;height:12px;background:#232323"></div><div style="left:0px;top:107px;width:90px;height:1px;background:#141414"></div><div style="left:0px;top:108px;width:90px;height:1px;background:#3a3a3a"></div><div style="left:0px;top:109px;width:90px;height:12px;background:#232323"></div><div style="left:0px;top:121px;width:90px;height:1px;background:#141414"></div><div style="left:0px;top:122px;width:90px;height:1px;background:#3a3a3a"></div><div style="left:0px;top:123px;width:90px;height:12px;background:#232323"></div><div style="left:0px;top:135px;width:90px;height:1px;background:#141414"></div><div style="left:0px;top:136px;width:90px;height:1px;background:#3a3a3a"></div><div style="left:0px;top:0px;width:1px;height:136px;background:#262626"></div><div style="left:1px;top:0px;width:1px;height:136px;background:#080808"></div><div style="left:89px;top:0px;width:1px;height:136px;background:#080808"></div><div style="left:0px;top:136px;width:90px;height:2px;background:#050505"></div><div style="left:0px;top:138px;width:90px;height:1px;background:#3a3a3a"></div><div style="left:0px;top:139px;width:90px;height:5px;background:#151515"></div><div style="left:0px;top:144px;width:90px;height:29px;background:linear-gradient(#5e5c5c,#bebcbc 4px,#dad8d8 8px,#dcdada 24px,#cfcdcd)"></div><div style="left:89px;top:144px;width:1px;height:29px;background:#0a0a0a"></div><div style="left:5px;top:149px;width:80px;height:18px;background:linear-gradient(#5c5858,#6a6767 30%,#747272);border-radius:2px;box-shadow:0 1px 0 #f4f4f4;font-weight:bold;font-size:10px;color:#050505;text-align:center;line-height:19px;letter-spacing:.2px">0.00</div><div style="left:0px;top:173px;width:90px;height:3px;background:linear-gradient(#9a9898,#b6b4b4)"></div><div style="left:0px;top:176px;width:90px;height:23px;background:#c4c2c2"></div><div style="left:4px;top:178px;width:82px;height:17px;border:1px solid #5e5a5a;border-radius:2px;background:#c2c0c0"></div><div style="left:12px;top:182px;width:49px;height:9px;background:#0c0c0c;color:#a8a8a8;font-size:7.5px;font-weight:bold;letter-spacing:1.9px;text-align:center;line-height:9px;text-indent:2px">ENV</div><div style="left:67px;top:182px;width:12px;height:9px;border:1px solid #050505;background:linear-gradient(#9a9a9a,#7c7c7c)"></div><div style="left:0px;top:199px;width:90px;height:3px;background:#050505"></div><div style="left:0px;top:202px;width:90px;height:1px;background:#444"></div><div style="left:0px;top:203px;width:90px;height:21px;background:#1a1a1a;color:#84a0a8;font-size:10.5px;text-align:center;line-height:22px;letter-spacing:.4px;text-shadow:0 0 2px #0a3038">center</div><div style="left:0px;top:224px;width:90px;height:2px;background:#050505"></div><div style="left:0px;top:226px;width:90px;height:2px;background:#5a5858"></div><div style="left:0px;top:228px;width:90px;height:54px;background:#c6c2c2"></div><div style="left:4px;top:232px;width:82px;height:48px;border:1px solid #4a4646;border-top:3px solid #4c4848;border-bottom:3px solid #4c4848;border-radius:2px;background:#c6c2c2"></div><div style="left:41.5px;top:234px;width:8px;height:4.5px;background:#4c4848;clip-path:polygon(0 0,100% 0,50% 100%)"></div><div style="left:29.799999999999997px;top:239.9px;width:3.2px;height:3.2px;background:#2e2828;border-radius:50%"></div><div style="left:57.8px;top:239.9px;width:3.2px;height:3.2px;background:#2e2828;border-radius:50%"></div><div style="left:24.099999999999998px;top:253.9px;width:3.2px;height:3.2px;background:#2e2828;border-radius:50%"></div><div style="left:63.4px;top:253.9px;width:3.2px;height:3.2px;background:#2e2828;border-radius:50%"></div><div style="left:29.799999999999997px;top:267.9px;width:3.2px;height:3.2px;background:#2e2828;border-radius:50%"></div><div style="left:57.8px;top:267.9px;width:3.2px;height:3.2px;background:#2e2828;border-radius:50%"></div><div style="left:28.4px;top:244.5px;width:36px;height:32px;border-radius:50%;background:radial-gradient(closest-side,rgba(40,30,30,.55),rgba(40,30,30,0))"></div><div style="left:30.799999999999997px;top:240.7px;width:29.3px;height:29.6px;border-radius:50%;background:linear-gradient(175deg,#f0f4f4 0%,#d4dcdd 40%,#a3b3b6 75%,#7d9195 100%);box-shadow:0 0 0 .6px rgba(70,80,80,.45)"></div><div style="left:34.2px;top:243.8px;width:22.4px;height:22.4px;border-radius:50%;background:radial-gradient(circle at 50% 30%,#2f7188,#28657b 60%,#1e5062 100%);box-shadow:0 0 0 .6px #5a7a80"></div><div style="left:44.699999999999996px;top:244.0px;width:1.4px;height:10.5px;background:#cdeed6"></div><div style="left:0px;top:282px;width:90px;height:3px;background:linear-gradient(#b0acac,#8e8a8a)"></div><div style="left:0px;top:285px;width:90px;height:2px;background:#050505"></div><div style="left:0px;top:287px;width:90px;height:29px;background:#383836"></div><div style="left:0px;top:287px;width:90px;height:2px;background:#42464c"></div><div style="left:0px;top:315px;width:90px;height:1px;background:#141414"></div><div style="left:89px;top:287px;width:1px;height:29px;background:#141414"></div><div style="left:3px;top:291px;width:84px;height:22px;background:#0e0c0a"></div><div style="left:4px;top:292px;width:82px;height:20px;background:radial-gradient(ellipse 40% 3px at 50% 0,rgba(255,235,200,.8),rgba(255,235,200,0)),linear-gradient(#b6a78c,#cbc0a6 25%,#d3c9b4 50%,#c6baa2 80%,#b3a68c)"></div><div style="left:0px;top:316px;width:90px;height:599px;background:linear-gradient(#262626 0,#353535 8px,#3a3a3a 16px,#3b3b3b)"></div><div style="left:0px;top:316px;width:1px;height:599px;background:#585858"></div><div style="left:89px;top:316px;width:1px;height:599px;background:#1e1e1e"></div><div style="left:14px;top:333px;width:8px;height:563px;background:#161616;border-radius:4px;box-shadow:0 -1px 0 #444"></div><div style="left:15.5px;top:336px;width:1px;height:557px;background:#3a3a3a"></div><div style="left:19.5px;top:336px;width:1px;height:557px;background:#2e2e2e"></div><div style="left:32px;top:333px;width:24px;height:563px;background:linear-gradient(#1f1f1f,#141414 40%,#050505 85%,#000)"></div><div style="left:56px;top:333px;width:1px;height:563px;background:#4c4c4c"></div><div style="left:32px;top:346px;width:24px;height:12px;color:#e2e2e2;font-size:9.5px;font-weight:bold;text-align:center;line-height:12px">-inf</div><div class="db" style="left:32px;top:365.6px;width:24px;height:8px;opacity:0.95">-0-</div><div class="db" style="left:32px;top:399px;width:24px;height:8px;opacity:0.88">-6-</div><div class="db" style="left:32px;top:433.8px;width:24px;height:8px;opacity:0.81">-12-</div><div class="db" style="left:32px;top:468px;width:24px;height:8px;opacity:0.74">-18-</div><div class="db" style="left:32px;top:502px;width:24px;height:8px;opacity:0.67">-24-</div><div class="db" style="left:32px;top:536px;width:24px;height:8px;opacity:0.60">-30-</div><div class="db" style="left:32px;top:571px;width:24px;height:8px;opacity:0.53">-36-</div><div class="db" style="left:32px;top:605.7px;width:24px;height:8px;opacity:0.46">-42-</div><div class="db" style="left:32px;top:639.5px;width:24px;height:8px;opacity:0.39">-48-</div><div class="db" style="left:32px;top:674px;width:24px;height:8px;opacity:0.32">-54-</div><div class="db" style="left:32px;top:709px;width:24px;height:8px;opacity:0.25">-60-</div><div class="db" style="left:32px;top:743px;width:24px;height:8px;opacity:0.25">-66-</div><div style="left:34px;top:886px;width:20px;height:1px;background:#454545"></div><div style="left:34px;top:887px;width:22px;height:8px;font-size:7.5px;font-weight:bold;line-height:8px;color:#6f6f6f;letter-spacing:.6px;text-indent:1px"><span style="color:#86a85a">M</span>SR</div><div class="btn" style="left:63px;top:343px;width:19px;height:14px;"><span class="bl">S</span></div><div class="btn" style="left:63px;top:365px;width:19px;height:14px;"><span class="bl">M</span></div><div class="btn" style="left:63px;top:387px;width:19px;height:14px;"><svg style="position:absolute;left:4px;top:1px" width="11" height="12" viewBox="0 0 11 12"><circle cx="5.5" cy="6" r="3.3" fill="none" stroke="#222" stroke-width="1.3"/><path d="M1.2 10.8L9.8 1.2" stroke="#222" stroke-width="1.2"/></svg></div><div class="btn" style="left:63px;top:603px;width:19px;height:14px;font-size:10.5px;letter-spacing:.2px"><span class="bl" style="transform:scaleX(1.12)">Fx</span></div><div style="left:67px;top:622px;width:11px;height:8px;border:1px solid #0a0a0a;background:#6e6e6e"></div><div class="btn" style="left:63px;top:879px;width:19px;height:14px;"><div style="left:5px;top:2px;width:10px;height:10px;border-radius:50%;border:2px solid #2a2a2a;background:#9a9a9a"></div></div><div style="left:5px;top:477px;width:25px;height:49px;background:radial-gradient(closest-side,rgba(0,0,0,.6),rgba(0,0,0,0))"></div><div style="left:8px;top:479px;width:19px;height:7px;background:linear-gradient(#dcdcdc,#f6f6f6 50%,#d4d4d4)"></div><div style="left:8px;top:486px;width:19px;height:1px;background:#2a2826"></div><div style="left:8px;top:487px;width:19px;height:13px;background:repeating-linear-gradient(#a6a29e 0,#a6a29e 1px,#75716d 1px,#75716d 2px)"></div><div style="left:8px;top:500px;width:19px;height:2px;background:#121212"></div><div style="left:8px;top:502px;width:19px;height:10px;background:repeating-linear-gradient(#b0b4b6 0,#b0b4b6 1px,#7e8284 1px,#7e8284 2px)"></div><div style="left:8px;top:512px;width:19px;height:4px;background:#d6d6d4"></div><div style="left:8px;top:516px;width:19px;height:1px;background:#f2f2f2"></div><div style="left:8px;top:517px;width:19px;height:6px;background:linear-gradient(#7c7c7c,#505050)"></div><div style="left:0px;top:915px;width:90px;height:2px;background:#0a0a0a"></div><div style="left:0px;top:917px;width:90px;height:25px;background:#1a1a1a"></div><div style="left:2px;top:920px;width:86px;height:19px;background:#111"></div><div style="left:3px;top:921px;width:84px;height:17px;background:linear-gradient(#777,#6a6a6a 50%,#5e5e5e)"></div><div style="left:9px;top:921px;width:40px;height:17px;font-family:'Liberation Serif',serif;font-weight:bold;font-size:12.5px;line-height:17px;color:#0a0a0a">11</div><div style="left:0px;top:942px;width:90px;height:1px;background:#7a7a7a"></div><div style="left:0px;top:943px;width:90px;height:22px;background:#2a2a2a"></div><div style="left:0px;top:942px;width:2px;height:34px;background:#6a6a6a"></div><div style="left:87px;top:942px;width:2px;height:34px;background:#6a6a6a"></div><div style="left:3px;top:944px;width:84px;height:20px;background:linear-gradient(#1c1c1c,#121212);border:1px solid #4a4a4a;border-top-color:#2a2a2a"></div><div style="left:2px;top:965px;width:85px;height:11px;background:linear-gradient(#3a3a3a,#454545)"></div><div style="left:0px;top:976px;width:90px;height:2px;background:#1b1e21"></div></div><div class="strip" style="left:694px"><div style="left:0px;top:0px;width:90px;height:3px;background:#333"></div><div style="left:0px;top:3px;width:90px;height:1px;background:#1a1a1a"></div><div style="left:0px;top:4px;width:90px;height:1px;background:#4a4a4a"></div><div style="left:0px;top:5px;width:90px;height:6px;background:#363636"></div><div style="left:0px;top:11px;width:90px;height:1px;background:#4c4c4c"></div><div style="left:0px;top:12px;width:90px;height:1px;background:#0d0d0d"></div><div style="left:0px;top:13px;width:90px;height:10px;background:linear-gradient(#171717,#212121)"></div><div style="left:0px;top:23px;width:90px;height:1px;background:#141414"></div><div style="left:0px;top:24px;width:90px;height:1px;background:#3a3a3a"></div><div style="left:0px;top:25px;width:90px;height:12px;background:#232323"></div><div style="left:0px;top:37px;width:90px;height:1px;background:#141414"></div><div style="left:0px;top:38px;width:90px;height:1px;background:#3a3a3a"></div><div style="left:0px;top:39px;width:90px;height:12px;background:#232323"></div><div style="left:0px;top:51px;width:90px;height:1px;background:#141414"></div><div style="left:0px;top:52px;width:90px;height:1px;background:#3a3a3a"></div><div style="left:0px;top:53px;width:90px;height:12px;background:#232323"></div><div style="left:0px;top:65px;width:90px;height:1px;background:#141414"></div><div style="left:0px;top:66px;width:90px;height:1px;background:#3a3a3a"></div><div style="left:0px;top:67px;width:90px;height:12px;background:#232323"></div><div style="left:0px;top:79px;width:90px;height:1px;background:#141414"></div><div style="left:0px;top:80px;width:90px;height:1px;background:#3a3a3a"></div><div style="left:0px;top:81px;width:90px;height:12px;background:#232323"></div><div style="left:0px;top:93px;width:90px;height:1px;background:#141414"></div><div style="left:0px;top:94px;width:90px;height:1px;background:#3a3a3a"></div><div style="left:0px;top:95px;width:90px;height:12px;background:#232323"></div><div style="left:0px;top:107px;width:90px;height:1px;background:#141414"></div><div style="left:0px;top:108px;width:90px;height:1px;background:#3a3a3a"></div><div style="left:0px;top:109px;width:90px;height:12px;background:#232323"></div><div style="left:0px;top:121px;width:90px;height:1px;background:#141414"></div><div style="left:0px;top:122px;width:90px;height:1px;background:#3a3a3a"></div><div style="left:0px;top:123px;width:90px;height:12px;background:#232323"></div><div style="left:0px;top:135px;width:90px;height:1px;background:#141414"></div><div style="left:0px;top:136px;width:90px;height:1px;background:#3a3a3a"></div><div style="left:0px;top:0px;width:1px;height:136px;background:#262626"></div><div style="left:1px;top:0px;width:1px;height:136px;background:#080808"></div><div style="left:89px;top:0px;width:1px;height:136px;background:#080808"></div><div style="left:0px;top:136px;width:90px;height:2px;background:#050505"></div><div style="left:0px;top:138px;width:90px;height:1px;background:#3a3a3a"></div><div style="left:0px;top:139px;width:90px;height:5px;background:#151515"></div><div style="left:0px;top:144px;width:90px;height:29px;background:linear-gradient(#5e5c5c,#bebcbc 4px,#dad8d8 8px,#dcdada 24px,#cfcdcd)"></div><div style="left:89px;top:144px;width:1px;height:29px;background:#0a0a0a"></div><div style="left:5px;top:149px;width:80px;height:18px;background:linear-gradient(#5c5858,#6a6767 30%,#747272);border-radius:2px;box-shadow:0 1px 0 #f4f4f4;font-weight:bold;font-size:10px;color:#050505;text-align:center;line-height:19px;letter-spacing:.2px">0.00</div><div style="left:0px;top:173px;width:90px;height:3px;background:linear-gradient(#9a9898,#b6b4b4)"></div><div style="left:0px;top:176px;width:90px;height:23px;background:#c4c2c2"></div><div style="left:4px;top:178px;width:82px;height:17px;border:1px solid #5e5a5a;border-radius:2px;background:#c2c0c0"></div><div style="left:12px;top:182px;width:49px;height:9px;background:#0c0c0c;color:#a8a8a8;font-size:7.5px;font-weight:bold;letter-spacing:1.9px;text-align:center;line-height:9px;text-indent:2px">ENV</div><div style="left:67px;top:182px;width:12px;height:9px;border:1px solid #050505;background:linear-gradient(#9a9a9a,#7c7c7c)"></div><div style="left:0px;top:199px;width:90px;height:3px;background:#050505"></div><div style="left:0px;top:202px;width:90px;height:1px;background:#444"></div><div style="left:0px;top:203px;width:90px;height:21px;background:#1a1a1a;color:#84a0a8;font-size:10.5px;text-align:center;line-height:22px;letter-spacing:.4px;text-shadow:0 0 2px #0a3038">center</div><div style="left:0px;top:224px;width:90px;height:2px;background:#050505"></div><div style="left:0px;top:226px;width:90px;height:2px;background:#5a5858"></div><div style="left:0px;top:228px;width:90px;height:54px;background:#c6c2c2"></div><div style="left:4px;top:232px;width:82px;height:48px;border:1px solid #4a4646;border-top:3px solid #4c4848;border-bottom:3px solid #4c4848;border-radius:2px;background:#c6c2c2"></div><div style="left:41.5px;top:234px;width:8px;height:4.5px;background:#4c4848;clip-path:polygon(0 0,100% 0,50% 100%)"></div><div style="left:29.799999999999997px;top:239.9px;width:3.2px;height:3.2px;background:#2e2828;border-radius:50%"></div><div style="left:57.8px;top:239.9px;width:3.2px;height:3.2px;background:#2e2828;border-radius:50%"></div><div style="left:24.099999999999998px;top:253.9px;width:3.2px;height:3.2px;background:#2e2828;border-radius:50%"></div><div style="left:63.4px;top:253.9px;width:3.2px;height:3.2px;background:#2e2828;border-radius:50%"></div><div style="left:29.799999999999997px;top:267.9px;width:3.2px;height:3.2px;background:#2e2828;border-radius:50%"></div><div style="left:57.8px;top:267.9px;width:3.2px;height:3.2px;background:#2e2828;border-radius:50%"></div><div style="left:28.4px;top:244.5px;width:36px;height:32px;border-radius:50%;background:radial-gradient(closest-side,rgba(40,30,30,.55),rgba(40,30,30,0))"></div><div style="left:30.799999999999997px;top:240.7px;width:29.3px;height:29.6px;border-radius:50%;background:linear-gradient(175deg,#f0f4f4 0%,#d4dcdd 40%,#a3b3b6 75%,#7d9195 100%);box-shadow:0 0 0 .6px rgba(70,80,80,.45)"></div><div style="left:34.2px;top:243.8px;width:22.4px;height:22.4px;border-radius:50%;background:radial-gradient(circle at 50% 30%,#2f7188,#28657b 60%,#1e5062 100%);box-shadow:0 0 0 .6px #5a7a80"></div><div style="left:44.699999999999996px;top:244.0px;width:1.4px;height:10.5px;background:#cdeed6"></div><div style="left:0px;top:282px;width:90px;height:3px;background:linear-gradient(#b0acac,#8e8a8a)"></div><div style="left:0px;top:285px;width:90px;height:2px;background:#050505"></div><div style="left:0px;top:287px;width:90px;height:29px;background:#383836"></div><div style="left:0px;top:287px;width:90px;height:2px;background:#42464c"></div><div style="left:0px;top:315px;width:90px;height:1px;background:#141414"></div><div style="left:89px;top:287px;width:1px;height:29px;background:#141414"></div><div style="left:3px;top:291px;width:84px;height:22px;background:#0e0c0a"></div><div style="left:4px;top:292px;width:82px;height:20px;background:radial-gradient(ellipse 40% 3px at 50% 0,rgba(255,235,200,.8),rgba(255,235,200,0)),linear-gradient(#b6a78c,#cbc0a6 25%,#d3c9b4 50%,#c6baa2 80%,#b3a68c)"></div><div style="left:0px;top:316px;width:90px;height:599px;background:linear-gradient(#262626 0,#353535 8px,#3a3a3a 16px,#3b3b3b)"></div><div style="left:0px;top:316px;width:1px;height:599px;background:#585858"></div><div style="left:89px;top:316px;width:1px;height:599px;background:#1e1e1e"></div><div style="left:14px;top:333px;width:8px;height:563px;background:#161616;border-radius:4px;box-shadow:0 -1px 0 #444"></div><div style="left:15.5px;top:336px;width:1px;height:557px;background:#3a3a3a"></div><div style="left:19.5px;top:336px;width:1px;height:557px;background:#2e2e2e"></div><div style="left:32px;top:333px;width:24px;height:563px;background:linear-gradient(#1f1f1f,#141414 40%,#050505 85%,#000)"></div><div style="left:56px;top:333px;width:1px;height:563px;background:#4c4c4c"></div><div style="left:32px;top:346px;width:24px;height:12px;color:#e2e2e2;font-size:9.5px;font-weight:bold;text-align:center;line-height:12px">-inf</div><div class="db" style="left:32px;top:365.6px;width:24px;height:8px;opacity:0.95">-0-</div><div class="db" style="left:32px;top:399px;width:24px;height:8px;opacity:0.88">-6-</div><div class="db" style="left:32px;top:433.8px;width:24px;height:8px;opacity:0.81">-12-</div><div class="db" style="left:32px;top:468px;width:24px;height:8px;opacity:0.74">-18-</div><div class="db" style="left:32px;top:502px;width:24px;height:8px;opacity:0.67">-24-</div><div class="db" style="left:32px;top:536px;width:24px;height:8px;opacity:0.60">-30-</div><div class="db" style="left:32px;top:571px;width:24px;height:8px;opacity:0.53">-36-</div><div class="db" style="left:32px;top:605.7px;width:24px;height:8px;opacity:0.46">-42-</div><div class="db" style="left:32px;top:639.5px;width:24px;height:8px;opacity:0.39">-48-</div><div class="db" style="left:32px;top:674px;width:24px;height:8px;opacity:0.32">-54-</div><div class="db" style="left:32px;top:709px;width:24px;height:8px;opacity:0.25">-60-</div><div class="db" style="left:32px;top:743px;width:24px;height:8px;opacity:0.25">-66-</div><div style="left:34px;top:886px;width:20px;height:1px;background:#454545"></div><div style="left:34px;top:887px;width:22px;height:8px;font-size:7.5px;font-weight:bold;line-height:8px;color:#6f6f6f;letter-spacing:.6px;text-indent:1px"><span style="color:#86a85a">M</span>SR</div><div class="btn" style="left:63px;top:343px;width:19px;height:14px;"><span class="bl">S</span></div><div class="btn" style="left:63px;top:365px;width:19px;height:14px;"><span class="bl">M</span></div><div class="btn" style="left:63px;top:387px;width:19px;height:14px;"><svg style="position:absolute;left:4px;top:1px" width="11" height="12" viewBox="0 0 11 12"><circle cx="5.5" cy="6" r="3.3" fill="none" stroke="#222" stroke-width="1.3"/><path d="M1.2 10.8L9.8 1.2" stroke="#222" stroke-width="1.2"/></svg></div><div class="btn" style="left:63px;top:603px;width:19px;height:14px;font-size:10.5px;letter-spacing:.2px"><span class="bl" style="transform:scaleX(1.12)">Fx</span></div><div style="left:67px;top:622px;width:11px;height:8px;border:1px solid #0a0a0a;background:#6e6e6e"></div><div class="btn" style="left:63px;top:879px;width:19px;height:14px;"><div style="left:5px;top:2px;width:10px;height:10px;border-radius:50%;border:2px solid #2a2a2a;background:#9a9a9a"></div></div><div style="left:5px;top:477px;width:25px;height:49px;background:radial-gradient(closest-side,rgba(0,0,0,.6),rgba(0,0,0,0))"></div><div style="left:8px;top:479px;width:19px;height:7px;background:linear-gradient(#dcdcdc,#f6f6f6 50%,#d4d4d4)"></div><div style="left:8px;top:486px;width:19px;height:1px;background:#2a2826"></div><div style="left:8px;top:487px;width:19px;height:13px;background:repeating-linear-gradient(#a6a29e 0,#a6a29e 1px,#75716d 1px,#75716d 2px)"></div><div style="left:8px;top:500px;width:19px;height:2px;background:#121212"></div><div style="left:8px;top:502px;width:19px;height:10px;background:repeating-linear-gradient(#b0b4b6 0,#b0b4b6 1px,#7e8284 1px,#7e8284 2px)"></div><div style="left:8px;top:512px;width:19px;height:4px;background:#d6d6d4"></div><div style="left:8px;top:516px;width:19px;height:1px;background:#f2f2f2"></div><div style="left:8px;top:517px;width:19px;height:6px;background:linear-gradient(#7c7c7c,#505050)"></div><div style="left:0px;top:915px;width:90px;height:2px;background:#0a0a0a"></div><div style="left:0px;top:917px;width:90px;height:25px;background:#1a1a1a"></div><div style="left:2px;top:920px;width:86px;height:19px;background:#111"></div><div style="left:3px;top:921px;width:84px;height:17px;background:linear-gradient(#777,#6a6a6a 50%,#5e5e5e)"></div><div style="left:9px;top:921px;width:40px;height:17px;font-family:'Liberation Serif',serif;font-weight:bold;font-size:12.5px;line-height:17px;color:#0a0a0a">12</div><div style="left:0px;top:942px;width:90px;height:1px;background:#7a7a7a"></div><div style="left:0px;top:943px;width:90px;height:22px;background:#2a2a2a"></div><div style="left:0px;top:942px;width:2px;height:34px;background:#6a6a6a"></div><div style="left:87px;top:942px;width:2px;height:34px;background:#6a6a6a"></div><div style="left:3px;top:944px;width:84px;height:20px;background:linear-gradient(#1c1c1c,#121212);border:1px solid #4a4a4a;border-top-color:#2a2a2a"></div><div style="left:2px;top:965px;width:85px;height:11px;background:linear-gradient(#3a3a3a,#454545)"></div><div style="left:0px;top:976px;width:90px;height:2px;background:#1b1e21"></div></div><div class="strip" style="left:784px"><div style="left:0px;top:0px;width:90px;height:3px;background:#333"></div><div style="left:0px;top:3px;width:90px;height:1px;background:#1a1a1a"></div><div style="left:0px;top:4px;width:90px;height:1px;background:#4a4a4a"></div><div style="left:0px;top:5px;width:90px;height:6px;background:#363636"></div><div style="left:0px;top:11px;width:90px;height:1px;background:#4c4c4c"></div><div style="left:0px;top:12px;width:90px;height:1px;background:#0d0d0d"></div><div style="left:0px;top:13px;width:90px;height:10px;background:linear-gradient(#171717,#212121)"></div><div style="left:0px;top:23px;width:90px;height:1px;background:#141414"></div><div style="left:0px;top:24px;width:90px;height:1px;background:#3a3a3a"></div><div style="left:0px;top:25px;width:90px;height:12px;background:#232323"></div><div style="left:0px;top:37px;width:90px;height:1px;background:#141414"></div><div style="left:0px;top:38px;width:90px;height:1px;background:#3a3a3a"></div><div style="left:0px;top:39px;width:90px;height:12px;background:#232323"></div><div style="left:0px;top:51px;width:90px;height:1px;background:#141414"></div><div style="left:0px;top:52px;width:90px;height:1px;background:#3a3a3a"></div><div style="left:0px;top:53px;width:90px;height:12px;background:#232323"></div><div style="left:0px;top:65px;width:90px;height:1px;background:#141414"></div><div style="left:0px;top:66px;width:90px;height:1px;background:#3a3a3a"></div><div style="left:0px;top:67px;width:90px;height:12px;background:#232323"></div><div style="left:0px;top:79px;width:90px;height:1px;background:#141414"></div><div style="left:0px;top:80px;width:90px;height:1px;background:#3a3a3a"></div><div style="left:0px;top:81px;width:90px;height:12px;background:#232323"></div><div style="left:0px;top:93px;width:90px;height:1px;background:#141414"></div><div style="left:0px;top:94px;width:90px;height:1px;background:#3a3a3a"></div><div style="left:0px;top:95px;width:90px;height:12px;background:#232323"></div><div style="left:0px;top:107px;width:90px;height:1px;background:#141414"></div><div style="left:0px;top:108px;width:90px;height:1px;background:#3a3a3a"></div><div style="left:0px;top:109px;width:90px;height:12px;background:#232323"></div><div style="left:0px;top:121px;width:90px;height:1px;background:#141414"></div><div style="left:0px;top:122px;width:90px;height:1px;background:#3a3a3a"></div><div style="left:0px;top:123px;width:90px;height:12px;background:#232323"></div><div style="left:0px;top:135px;width:90px;height:1px;background:#141414"></div><div style="left:0px;top:136px;width:90px;height:1px;background:#3a3a3a"></div><div style="left:0px;top:0px;width:1px;height:136px;background:#262626"></div><div style="left:1px;top:0px;width:1px;height:136px;background:#080808"></div><div style="left:89px;top:0px;width:1px;height:136px;background:#080808"></div><div style="left:0px;top:136px;width:90px;height:2px;background:#050505"></div><div style="left:0px;top:138px;width:90px;height:1px;background:#3a3a3a"></div><div style="left:0px;top:139px;width:90px;height:5px;background:#151515"></div><div style="left:0px;top:144px;width:90px;height:29px;background:linear-gradient(#5e5c5c,#bebcbc 4px,#dad8d8 8px,#dcdada 24px,#cfcdcd)"></div><div style="left:89px;top:144px;width:1px;height:29px;background:#0a0a0a"></div><div style="left:5px;top:149px;width:80px;height:18px;background:linear-gradient(#5c5858,#6a6767 30%,#747272);border-radius:2px;box-shadow:0 1px 0 #f4f4f4;font-weight:bold;font-size:10px;color:#050505;text-align:center;line-height:19px;letter-spacing:.2px">0.00</div><div style="left:0px;top:173px;width:90px;height:3px;background:linear-gradient(#9a9898,#b6b4b4)"></div><div style="left:0px;top:176px;width:90px;height:23px;background:#c4c2c2"></div><div style="left:4px;top:178px;width:82px;height:17px;border:1px solid #5e5a5a;border-radius:2px;background:#c2c0c0"></div><div style="left:12px;top:182px;width:49px;height:9px;background:#0c0c0c;color:#a8a8a8;font-size:7.5px;font-weight:bold;letter-spacing:1.9px;text-align:center;line-height:9px;text-indent:2px">ENV</div><div style="left:67px;top:182px;width:12px;height:9px;border:1px solid #050505;background:linear-gradient(#9a9a9a,#7c7c7c)"></div><div style="left:0px;top:199px;width:90px;height:3px;background:#050505"></div><div style="left:0px;top:202px;width:90px;height:1px;background:#444"></div><div style="left:0px;top:203px;width:90px;height:21px;background:#1a1a1a;color:#84a0a8;font-size:10.5px;text-align:center;line-height:22px;letter-spacing:.4px;text-shadow:0 0 2px #0a3038">center</div><div style="left:0px;top:224px;width:90px;height:2px;background:#050505"></div><div style="left:0px;top:226px;width:90px;height:2px;background:#5a5858"></div><div style="left:0px;top:228px;width:90px;height:54px;background:#c6c2c2"></div><div style="left:4px;top:232px;width:82px;height:48px;border:1px solid #4a4646;border-top:3px solid #4c4848;border-bottom:3px solid #4c4848;border-radius:2px;background:#c6c2c2"></div><div style="left:41.5px;top:234px;width:8px;height:4.5px;background:#4c4848;clip-path:polygon(0 0,100% 0,50% 100%)"></div><div style="left:29.799999999999997px;top:239.9px;width:3.2px;height:3.2px;background:#2e2828;border-radius:50%"></div><div style="left:57.8px;top:239.9px;width:3.2px;height:3.2px;background:#2e2828;border-radius:50%"></div><div style="left:24.099999999999998px;top:253.9px;width:3.2px;height:3.2px;background:#2e2828;border-radius:50%"></div><div style="left:63.4px;top:253.9px;width:3.2px;height:3.2px;background:#2e2828;border-radius:50%"></div><div style="left:29.799999999999997px;top:267.9px;width:3.2px;height:3.2px;background:#2e2828;border-radius:50%"></div><div style="left:57.8px;top:267.9px;width:3.2px;height:3.2px;background:#2e2828;border-radius:50%"></div><div style="left:28.4px;top:244.5px;width:36px;height:32px;border-radius:50%;background:radial-gradient(closest-side,rgba(40,30,30,.55),rgba(40,30,30,0))"></div><div style="left:30.799999999999997px;top:240.7px;width:29.3px;height:29.6px;border-radius:50%;background:linear-gradient(175deg,#f0f4f4 0%,#d4dcdd 40%,#a3b3b6 75%,#7d9195 100%);box-shadow:0 0 0 .6px rgba(70,80,80,.45)"></div><div style="left:34.2px;top:243.8px;width:22.4px;height:22.4px;border-radius:50%;background:radial-gradient(circle at 50% 30%,#2f7188,#28657b 60%,#1e5062 100%);box-shadow:0 0 0 .6px #5a7a80"></div><div style="left:44.699999999999996px;top:244.0px;width:1.4px;height:10.5px;background:#cdeed6"></div><div style="left:0px;top:282px;width:90px;height:3px;background:linear-gradient(#b0acac,#8e8a8a)"></div><div style="left:0px;top:285px;width:90px;height:2px;background:#050505"></div><div style="left:0px;top:287px;width:90px;height:29px;background:#383836"></div><div style="left:0px;top:287px;width:90px;height:2px;background:#42464c"></div><div style="left:0px;top:315px;width:90px;height:1px;background:#141414"></div><div style="left:89px;top:287px;width:1px;height:29px;background:#141414"></div><div style="left:3px;top:291px;width:84px;height:22px;background:#0e0c0a"></div><div style="left:4px;top:292px;width:82px;height:20px;background:radial-gradient(ellipse 40% 3px at 50% 0,rgba(255,235,200,.8),rgba(255,235,200,0)),linear-gradient(#b6a78c,#cbc0a6 25%,#d3c9b4 50%,#c6baa2 80%,#b3a68c)"></div><div style="left:0px;top:316px;width:90px;height:599px;background:linear-gradient(#262626 0,#353535 8px,#3a3a3a 16px,#3b3b3b)"></div><div style="left:0px;top:316px;width:1px;height:599px;background:#585858"></div><div style="left:89px;top:316px;width:1px;height:599px;background:#1e1e1e"></div><div style="left:14px;top:333px;width:8px;height:563px;background:#161616;border-radius:4px;box-shadow:0 -1px 0 #444"></div><div style="left:15.5px;top:336px;width:1px;height:557px;background:#3a3a3a"></div><div style="left:19.5px;top:336px;width:1px;height:557px;background:#2e2e2e"></div><div style="left:32px;top:333px;width:24px;height:563px;background:linear-gradient(#1f1f1f,#141414 40%,#050505 85%,#000)"></div><div style="left:56px;top:333px;width:1px;height:563px;background:#4c4c4c"></div><div style="left:32px;top:346px;width:24px;height:12px;color:#e2e2e2;font-size:9.5px;font-weight:bold;text-align:center;line-height:12px">-inf</div><div class="db" style="left:32px;top:365.6px;width:24px;height:8px;opacity:0.95">-0-</div><div class="db" style="left:32px;top:399px;width:24px;height:8px;opacity:0.88">-6-</div><div class="db" style="left:32px;top:433.8px;width:24px;height:8px;opacity:0.81">-12-</div><div class="db" style="left:32px;top:468px;width:24px;height:8px;opacity:0.74">-18-</div><div class="db" style="left:32px;top:502px;width:24px;height:8px;opacity:0.67">-24-</div><div class="db" style="left:32px;top:536px;width:24px;height:8px;opacity:0.60">-30-</div><div class="db" style="left:32px;top:571px;width:24px;height:8px;opacity:0.53">-36-</div><div class="db" style="left:32px;top:605.7px;width:24px;height:8px;opacity:0.46">-42-</div><div class="db" style="left:32px;top:639.5px;width:24px;height:8px;opacity:0.39">-48-</div><div class="db" style="left:32px;top:674px;width:24px;height:8px;opacity:0.32">-54-</div><div class="db" style="left:32px;top:709px;width:24px;height:8px;opacity:0.25">-60-</div><div class="db" style="left:32px;top:743px;width:24px;height:8px;opacity:0.25">-66-</div><div style="left:34px;top:886px;width:20px;height:1px;background:#454545"></div><div style="left:34px;top:887px;width:22px;height:8px;font-size:7.5px;font-weight:bold;line-height:8px;color:#6f6f6f;letter-spacing:.6px;text-indent:1px"><span style="color:#86a85a">M</span>SR</div><div class="btn" style="left:63px;top:343px;width:19px;height:14px;"><span class="bl">S</span></div><div class="btn" style="left:63px;top:365px;width:19px;height:14px;"><span class="bl">M</span></div><div class="btn" style="left:63px;top:387px;width:19px;height:14px;"><svg style="position:absolute;left:4px;top:1px" width="11" height="12" viewBox="0 0 11 12"><circle cx="5.5" cy="6" r="3.3" fill="none" stroke="#222" stroke-width="1.3"/><path d="M1.2 10.8L9.8 1.2" stroke="#222" stroke-width="1.2"/></svg></div><div class="btn" style="left:63px;top:603px;width:19px;height:14px;font-size:10.5px;letter-spacing:.2px"><span class="bl" style="transform:scaleX(1.12)">Fx</span></div><div style="left:67px;top:622px;width:11px;height:8px;border:1px solid #0a0a0a;background:#6e6e6e"></div><div class="btn" style="left:63px;top:879px;width:19px;height:14px;"><div style="left:5px;top:2px;width:10px;height:10px;border-radius:50%;border:2px solid #2a2a2a;background:#9a9a9a"></div></div><div style="left:5px;top:477px;width:25px;height:49px;background:radial-gradient(closest-side,rgba(0,0,0,.6),rgba(0,0,0,0))"></div><div style="left:8px;top:479px;width:19px;height:7px;background:linear-gradient(#dcdcdc,#f6f6f6 50%,#d4d4d4)"></div><div style="left:8px;top:486px;width:19px;height:1px;background:#2a2826"></div><div style="left:8px;top:487px;width:19px;height:13px;background:repeating-linear-gradient(#a6a29e 0,#a6a29e 1px,#75716d 1px,#75716d 2px)"></div><div style="left:8px;top:500px;width:19px;height:2px;background:#121212"></div><div style="left:8px;top:502px;width:19px;height:10px;background:repeating-linear-gradient(#b0b4b6 0,#b0b4b6 1px,#7e8284 1px,#7e8284 2px)"></div><div style="left:8px;top:512px;width:19px;height:4px;background:#d6d6d4"></div><div style="left:8px;top:516px;width:19px;height:1px;background:#f2f2f2"></div><div style="left:8px;top:517px;width:19px;height:6px;background:linear-gradient(#7c7c7c,#505050)"></div><div style="left:0px;top:915px;width:90px;height:2px;background:#0a0a0a"></div><div style="left:0px;top:917px;width:90px;height:25px;background:#1a1a1a"></div><div style="left:2px;top:920px;width:86px;height:19px;background:#111"></div><div style="left:3px;top:921px;width:84px;height:17px;background:linear-gradient(#777,#6a6a6a 50%,#5e5e5e)"></div><div style="left:9px;top:921px;width:40px;height:17px;font-family:'Liberation Serif',serif;font-weight:bold;font-size:12.5px;line-height:17px;color:#0a0a0a">13</div><div style="left:0px;top:942px;width:90px;height:1px;background:#7a7a7a"></div><div style="left:0px;top:943px;width:90px;height:22px;background:#2a2a2a"></div><div style="left:0px;top:942px;width:2px;height:34px;background:#6a6a6a"></div><div style="left:87px;top:942px;width:2px;height:34px;background:#6a6a6a"></div><div style="left:3px;top:944px;width:84px;height:20px;background:linear-gradient(#1c1c1c,#121212);border:1px solid #4a4a4a;border-top-color:#2a2a2a"></div><div style="left:2px;top:965px;width:85px;height:11px;background:linear-gradient(#3a3a3a,#454545)"></div><div style="left:0px;top:976px;width:90px;height:2px;background:#1b1e21"></div></div><div class="strip" style="left:874px"><div style="left:0px;top:0px;width:90px;height:3px;background:#333"></div><div style="left:0px;top:3px;width:90px;height:1px;background:#1a1a1a"></div><div style="left:0px;top:4px;width:90px;height:1px;background:#4a4a4a"></div><div style="left:0px;top:5px;width:90px;height:6px;background:#363636"></div><div style="left:0px;top:11px;width:90px;height:1px;background:#4c4c4c"></div><div style="left:0px;top:12px;width:90px;height:1px;background:#0d0d0d"></div><div style="left:0px;top:13px;width:90px;height:10px;background:linear-gradient(#171717,#212121)"></div><div style="left:0px;top:23px;width:90px;height:1px;background:#141414"></div><div style="left:0px;top:24px;width:90px;height:1px;background:#3a3a3a"></div><div style="left:0px;top:25px;width:90px;height:12px;background:#232323"></div><div style="left:0px;top:37px;width:90px;height:1px;background:#141414"></div><div style="left:0px;top:38px;width:90px;height:1px;background:#3a3a3a"></div><div style="left:0px;top:39px;width:90px;height:12px;background:#232323"></div><div style="left:0px;top:51px;width:90px;height:1px;background:#141414"></div><div style="left:0px;top:52px;width:90px;height:1px;background:#3a3a3a"></div><div style="left:0px;top:53px;width:90px;height:12px;background:#232323"></div><div style="left:0px;top:65px;width:90px;height:1px;background:#141414"></div><div style="left:0px;top:66px;width:90px;height:1px;background:#3a3a3a"></div><div style="left:0px;top:67px;width:90px;height:12px;background:#232323"></div><div style="left:0px;top:79px;width:90px;height:1px;background:#141414"></div><div style="left:0px;top:80px;width:90px;height:1px;background:#3a3a3a"></div><div style="left:0px;top:81px;width:90px;height:12px;background:#232323"></div><div style="left:0px;top:93px;width:90px;height:1px;background:#141414"></div><div style="left:0px;top:94px;width:90px;height:1px;background:#3a3a3a"></div><div style="left:0px;top:95px;width:90px;height:12px;background:#232323"></div><div style="left:0px;top:107px;width:90px;height:1px;background:#141414"></div><div style="left:0px;top:108px;width:90px;height:1px;background:#3a3a3a"></div><div style="left:0px;top:109px;width:90px;height:12px;background:#232323"></div><div style="left:0px;top:121px;width:90px;height:1px;background:#141414"></div><div style="left:0px;top:122px;width:90px;height:1px;background:#3a3a3a"></div><div style="left:0px;top:123px;width:90px;height:12px;background:#232323"></div><div style="left:0px;top:135px;width:90px;height:1px;background:#141414"></div><div style="left:0px;top:136px;width:90px;height:1px;background:#3a3a3a"></div><div style="left:0px;top:0px;width:1px;height:136px;background:#262626"></div><div style="left:1px;top:0px;width:1px;height:136px;background:#080808"></div><div style="left:89px;top:0px;width:1px;height:136px;background:#080808"></div><div style="left:0px;top:136px;width:90px;height:2px;background:#050505"></div><div style="left:0px;top:138px;width:90px;height:1px;background:#3a3a3a"></div><div style="left:0px;top:139px;width:90px;height:5px;background:#151515"></div><div style="left:0px;top:144px;width:90px;height:29px;background:linear-gradient(#5e5c5c,#bebcbc 4px,#dad8d8 8px,#dcdada 24px,#cfcdcd)"></div><div style="left:89px;top:144px;width:1px;height:29px;background:#0a0a0a"></div><div style="left:5px;top:149px;width:80px;height:18px;background:linear-gradient(#5c5858,#6a6767 30%,#747272);border-radius:2px;box-shadow:0 1px 0 #f4f4f4;font-weight:bold;font-size:10px;color:#050505;text-align:center;line-height:19px;letter-spacing:.2px">0.00</div><div style="left:0px;top:173px;width:90px;height:3px;background:linear-gradient(#9a9898,#b6b4b4)"></div><div style="left:0px;top:176px;width:90px;height:23px;background:#c4c2c2"></div><div style="left:4px;top:178px;width:82px;height:17px;border:1px solid #5e5a5a;border-radius:2px;background:#c2c0c0"></div><div style="left:12px;top:182px;width:49px;height:9px;background:#0c0c0c;color:#a8a8a8;font-size:7.5px;font-weight:bold;letter-spacing:1.9px;text-align:center;line-height:9px;text-indent:2px">ENV</div><div style="left:67px;top:182px;width:12px;height:9px;border:1px solid #050505;background:linear-gradient(#9a9a9a,#7c7c7c)"></div><div style="left:0px;top:199px;width:90px;height:3px;background:#050505"></div><div style="left:0px;top:202px;width:90px;height:1px;background:#444"></div><div style="left:0px;top:203px;width:90px;height:21px;background:#1a1a1a;color:#84a0a8;font-size:10.5px;text-align:center;line-height:22px;letter-spacing:.4px;text-shadow:0 0 2px #0a3038">center</div><div style="left:0px;top:224px;width:90px;height:2px;background:#050505"></div><div style="left:0px;top:226px;width:90px;height:2px;background:#5a5858"></div><div style="left:0px;top:228px;width:90px;height:54px;background:#c6c2c2"></div><div style="left:4px;top:232px;width:82px;height:48px;border:1px solid #4a4646;border-top:3px solid #4c4848;border-bottom:3px solid #4c4848;border-radius:2px;background:#c6c2c2"></div><div style="left:41.5px;top:234px;width:8px;height:4.5px;background:#4c4848;clip-path:polygon(0 0,100% 0,50% 100%)"></div><div style="left:29.799999999999997px;top:239.9px;width:3.2px;height:3.2px;background:#2e2828;border-radius:50%"></div><div style="left:57.8px;top:239.9px;width:3.2px;height:3.2px;background:#2e2828;border-radius:50%"></div><div style="left:24.099999999999998px;top:253.9px;width:3.2px;height:3.2px;background:#2e2828;border-radius:50%"></div><div style="left:63.4px;top:253.9px;width:3.2px;height:3.2px;background:#2e2828;border-radius:50%"></div><div style="left:29.799999999999997px;top:267.9px;width:3.2px;height:3.2px;background:#2e2828;border-radius:50%"></div><div style="left:57.8px;top:267.9px;width:3.2px;height:3.2px;background:#2e2828;border-radius:50%"></div><div style="left:28.4px;top:244.5px;width:36px;height:32px;border-radius:50%;background:radial-gradient(closest-side,rgba(40,30,30,.55),rgba(40,30,30,0))"></div><div style="left:30.799999999999997px;top:240.7px;width:29.3px;height:29.6px;border-radius:50%;background:linear-gradient(175deg,#f0f4f4 0%,#d4dcdd 40%,#a3b3b6 75%,#7d9195 100%);box-shadow:0 0 0 .6px rgba(70,80,80,.45)"></div><div style="left:34.2px;top:243.8px;width:22.4px;height:22.4px;border-radius:50%;background:radial-gradient(circle at 50% 30%,#2f7188,#28657b 60%,#1e5062 100%);box-shadow:0 0 0 .6px #5a7a80"></div><div style="left:44.699999999999996px;top:244.0px;width:1.4px;height:10.5px;background:#cdeed6"></div><div style="left:0px;top:282px;width:90px;height:3px;background:linear-gradient(#b0acac,#8e8a8a)"></div><div style="left:0px;top:285px;width:90px;height:2px;background:#050505"></div><div style="left:0px;top:287px;width:90px;height:29px;background:#383836"></div><div style="left:0px;top:287px;width:90px;height:2px;background:#42464c"></div><div style="left:0px;top:315px;width:90px;height:1px;background:#141414"></div><div style="left:89px;top:287px;width:1px;height:29px;background:#141414"></div><div style="left:3px;top:291px;width:84px;height:22px;background:#0e0c0a"></div><div style="left:4px;top:292px;width:82px;height:20px;background:radial-gradient(ellipse 40% 3px at 50% 0,rgba(255,235,200,.8),rgba(255,235,200,0)),linear-gradient(#b6a78c,#cbc0a6 25%,#d3c9b4 50%,#c6baa2 80%,#b3a68c)"></div><div style="left:0px;top:316px;width:90px;height:599px;background:linear-gradient(#262626 0,#353535 8px,#3a3a3a 16px,#3b3b3b)"></div><div style="left:0px;top:316px;width:1px;height:599px;background:#585858"></div><div style="left:89px;top:316px;width:1px;height:599px;background:#1e1e1e"></div><div style="left:14px;top:333px;width:8px;height:563px;background:#161616;border-radius:4px;box-shadow:0 -1px 0 #444"></div><div style="left:15.5px;top:336px;width:1px;height:557px;background:#3a3a3a"></div><div style="left:19.5px;top:336px;width:1px;height:557px;background:#2e2e2e"></div><div style="left:32px;top:333px;width:24px;height:563px;background:linear-gradient(#1f1f1f,#141414 40%,#050505 85%,#000)"></div><div style="left:56px;top:333px;width:1px;height:563px;background:#4c4c4c"></div><div style="left:32px;top:346px;width:24px;height:12px;color:#e2e2e2;font-size:9.5px;font-weight:bold;text-align:center;line-height:12px">-inf</div><div class="db" style="left:32px;top:365.6px;width:24px;height:8px;opacity:0.95">-0-</div><div class="db" style="left:32px;top:399px;width:24px;height:8px;opacity:0.88">-6-</div><div class="db" style="left:32px;top:433.8px;width:24px;height:8px;opacity:0.81">-12-</div><div class="db" style="left:32px;top:468px;width:24px;height:8px;opacity:0.74">-18-</div><div class="db" style="left:32px;top:502px;width:24px;height:8px;opacity:0.67">-24-</div><div class="db" style="left:32px;top:536px;width:24px;height:8px;opacity:0.60">-30-</div><div class="db" style="left:32px;top:571px;width:24px;height:8px;opacity:0.53">-36-</div><div class="db" style="left:32px;top:605.7px;width:24px;height:8px;opacity:0.46">-42-</div><div class="db" style="left:32px;top:639.5px;width:24px;height:8px;opacity:0.39">-48-</div><div class="db" style="left:32px;top:674px;width:24px;height:8px;opacity:0.32">-54-</div><div class="db" style="left:32px;top:709px;width:24px;height:8px;opacity:0.25">-60-</div><div class="db" style="left:32px;top:743px;width:24px;height:8px;opacity:0.25">-66-</div><div style="left:34px;top:886px;width:20px;height:1px;background:#454545"></div><div style="left:34px;top:887px;width:22px;height:8px;font-size:7.5px;font-weight:bold;line-height:8px;color:#6f6f6f;letter-spacing:.6px;text-indent:1px"><span style="color:#86a85a">M</span>SR</div><div class="btn" style="left:63px;top:343px;width:19px;height:14px;"><span class="bl">S</span></div><div class="btn" style="left:63px;top:365px;width:19px;height:14px;"><span class="bl">M</span></div><div class="btn" style="left:63px;top:387px;width:19px;height:14px;"><svg style="position:absolute;left:4px;top:1px" width="11" height="12" viewBox="0 0 11 12"><circle cx="5.5" cy="6" r="3.3" fill="none" stroke="#222" stroke-width="1.3"/><path d="M1.2 10.8L9.8 1.2" stroke="#222" stroke-width="1.2"/></svg></div><div class="btn" style="left:63px;top:603px;width:19px;height:14px;font-size:10.5px;letter-spacing:.2px"><span class="bl" style="transform:scaleX(1.12)">Fx</span></div><div style="left:67px;top:622px;width:11px;height:8px;border:1px solid #0a0a0a;background:#6e6e6e"></div><div class="btn" style="left:63px;top:879px;width:19px;height:14px;"><div style="left:5px;top:2px;width:10px;height:10px;border-radius:50%;border:2px solid #2a2a2a;background:#9a9a9a"></div></div><div style="left:5px;top:477px;width:25px;height:49px;background:radial-gradient(closest-side,rgba(0,0,0,.6),rgba(0,0,0,0))"></div><div style="left:8px;top:479px;width:19px;height:7px;background:linear-gradient(#dcdcdc,#f6f6f6 50%,#d4d4d4)"></div><div style="left:8px;top:486px;width:19px;height:1px;background:#2a2826"></div><div style="left:8px;top:487px;width:19px;height:13px;background:repeating-linear-gradient(#a6a29e 0,#a6a29e 1px,#75716d 1px,#75716d 2px)"></div><div style="left:8px;top:500px;width:19px;height:2px;background:#121212"></div><div style="left:8px;top:502px;width:19px;height:10px;background:repeating-linear-gradient(#b0b4b6 0,#b0b4b6 1px,#7e8284 1px,#7e8284 2px)"></div><div style="left:8px;top:512px;width:19px;height:4px;background:#d6d6d4"></div><div style="left:8px;top:516px;width:19px;height:1px;background:#f2f2f2"></div><div style="left:8px;top:517px;width:19px;height:6px;background:linear-gradient(#7c7c7c,#505050)"></div><div style="left:0px;top:915px;width:90px;height:2px;background:#0a0a0a"></div><div style="left:0px;top:917px;width:90px;height:25px;background:#1a1a1a"></div><div style="left:1px;top:919px;width:88px;height:21px;background:#bff3ea"></div><div style="left:3px;top:921px;width:84px;height:17px;background:linear-gradient(#6f7876,#5f6866)"></div><div style="left:9px;top:921px;width:40px;height:17px;font-family:'Liberation Serif',serif;font-weight:bold;font-size:12.5px;line-height:17px;color:#0a0a0a">14</div><div style="left:0px;top:942px;width:90px;height:1px;background:#7a7a7a"></div><div style="left:0px;top:943px;width:90px;height:22px;background:#2a2a2a"></div><div style="left:0px;top:942px;width:2px;height:34px;background:#6a6a6a"></div><div style="left:87px;top:942px;width:2px;height:34px;background:#6a6a6a"></div><div style="left:3px;top:944px;width:84px;height:20px;background:linear-gradient(#1c1c1c,#121212);border:1px solid #4a4a4a;border-top-color:#2a2a2a"></div><div style="left:2px;top:965px;width:85px;height:11px;background:linear-gradient(#3a3a3a,#454545)"></div><div style="left:0px;top:976px;width:90px;height:2px;background:#1b1e21"></div></div><div class="strip" style="left:964px"><div style="left:0px;top:0px;width:90px;height:3px;background:#333"></div><div style="left:0px;top:3px;width:90px;height:1px;background:#1a1a1a"></div><div style="left:0px;top:4px;width:90px;height:1px;background:#4a4a4a"></div><div style="left:0px;top:5px;width:90px;height:6px;background:#363636"></div><div style="left:0px;top:11px;width:90px;height:1px;background:#4c4c4c"></div><div style="left:0px;top:12px;width:90px;height:1px;background:#0d0d0d"></div><div style="left:0px;top:13px;width:90px;height:10px;background:linear-gradient(#171717,#212121)"></div><div style="left:0px;top:23px;width:90px;height:1px;background:#141414"></div><div style="left:0px;top:24px;width:90px;height:1px;background:#3a3a3a"></div><div style="left:0px;top:25px;width:90px;height:12px;background:#232323"></div><div style="left:0px;top:37px;width:90px;height:1px;background:#141414"></div><div style="left:0px;top:38px;width:90px;height:1px;background:#3a3a3a"></div><div style="left:0px;top:39px;width:90px;height:12px;background:#232323"></div><div style="left:0px;top:51px;width:90px;height:1px;background:#141414"></div><div style="left:0px;top:52px;width:90px;height:1px;background:#3a3a3a"></div><div style="left:0px;top:53px;width:90px;height:12px;background:#232323"></div><div style="left:0px;top:65px;width:90px;height:1px;background:#141414"></div><div style="left:0px;top:66px;width:90px;height:1px;background:#3a3a3a"></div><div style="left:0px;top:67px;width:90px;height:12px;background:#232323"></div><div style="left:0px;top:79px;width:90px;height:1px;background:#141414"></div><div style="left:0px;top:80px;width:90px;height:1px;background:#3a3a3a"></div><div style="left:0px;top:81px;width:90px;height:12px;background:#232323"></div><div style="left:0px;top:93px;width:90px;height:1px;background:#141414"></div><div style="left:0px;top:94px;width:90px;height:1px;background:#3a3a3a"></div><div style="left:0px;top:95px;width:90px;height:12px;background:#232323"></div><div style="left:0px;top:107px;width:90px;height:1px;background:#141414"></div><div style="left:0px;top:108px;width:90px;height:1px;background:#3a3a3a"></div><div style="left:0px;top:109px;width:90px;height:12px;background:#232323"></div><div style="left:0px;top:121px;width:90px;height:1px;background:#141414"></div><div style="left:0px;top:122px;width:90px;height:1px;background:#3a3a3a"></div><div style="left:0px;top:123px;width:90px;height:12px;background:#232323"></div><div style="left:0px;top:135px;width:90px;height:1px;background:#141414"></div><div style="left:0px;top:136px;width:90px;height:1px;background:#3a3a3a"></div><div style="left:0px;top:0px;width:1px;height:136px;background:#262626"></div><div style="left:1px;top:0px;width:1px;height:136px;background:#080808"></div><div style="left:89px;top:0px;width:1px;height:136px;background:#080808"></div><div style="left:0px;top:136px;width:90px;height:2px;background:#050505"></div><div style="left:0px;top:138px;width:90px;height:1px;background:#3a3a3a"></div><div style="left:0px;top:139px;width:90px;height:5px;background:#151515"></div><div style="left:0px;top:144px;width:90px;height:29px;background:linear-gradient(#5e5c5c,#bebcbc 4px,#dad8d8 8px,#dcdada 24px,#cfcdcd)"></div><div style="left:89px;top:144px;width:1px;height:29px;background:#0a0a0a"></div><div style="left:5px;top:149px;width:80px;height:18px;background:linear-gradient(#5c5858,#6a6767 30%,#747272);border-radius:2px;box-shadow:0 1px 0 #f4f4f4;font-weight:bold;font-size:10px;color:#050505;text-align:center;line-height:19px;letter-spacing:.2px">0.00</div><div style="left:0px;top:173px;width:90px;height:3px;background:linear-gradient(#9a9898,#b6b4b4)"></div><div style="left:0px;top:176px;width:90px;height:23px;background:#c4c2c2"></div><div style="left:4px;top:178px;width:82px;height:17px;border:1px solid #5e5a5a;border-radius:2px;background:#c2c0c0"></div><div style="left:12px;top:182px;width:49px;height:9px;background:#0c0c0c;color:#a8a8a8;font-size:7.5px;font-weight:bold;letter-spacing:1.9px;text-align:center;line-height:9px;text-indent:2px">ENV</div><div style="left:67px;top:182px;width:12px;height:9px;border:1px solid #050505;background:linear-gradient(#9a9a9a,#7c7c7c)"></div><div style="left:0px;top:199px;width:90px;height:3px;background:#050505"></div><div style="left:0px;top:202px;width:90px;height:1px;background:#444"></div><div style="left:0px;top:203px;width:90px;height:21px;background:#1a1a1a;color:#84a0a8;font-size:10.5px;text-align:center;line-height:22px;letter-spacing:.4px;text-shadow:0 0 2px #0a3038">center</div><div style="left:0px;top:224px;width:90px;height:2px;background:#050505"></div><div style="left:0px;top:226px;width:90px;height:2px;background:#5a5858"></div><div style="left:0px;top:228px;width:90px;height:54px;background:#c6c2c2"></div><div style="left:4px;top:232px;width:82px;height:48px;border:1px solid #4a4646;border-top:3px solid #4c4848;border-bottom:3px solid #4c4848;border-radius:2px;background:#c6c2c2"></div><div style="left:41.5px;top:234px;width:8px;height:4.5px;background:#4c4848;clip-path:polygon(0 0,100% 0,50% 100%)"></div><div style="left:29.799999999999997px;top:239.9px;width:3.2px;height:3.2px;background:#2e2828;border-radius:50%"></div><div style="left:57.8px;top:239.9px;width:3.2px;height:3.2px;background:#2e2828;border-radius:50%"></div><div style="left:24.099999999999998px;top:253.9px;width:3.2px;height:3.2px;background:#2e2828;border-radius:50%"></div><div style="left:63.4px;top:253.9px;width:3.2px;height:3.2px;background:#2e2828;border-radius:50%"></div><div style="left:29.799999999999997px;top:267.9px;width:3.2px;height:3.2px;background:#2e2828;border-radius:50%"></div><div style="left:57.8px;top:267.9px;width:3.2px;height:3.2px;background:#2e2828;border-radius:50%"></div><div style="left:28.4px;top:244.5px;width:36px;height:32px;border-radius:50%;background:radial-gradient(closest-side,rgba(40,30,30,.55),rgba(40,30,30,0))"></div><div style="left:30.799999999999997px;top:240.7px;width:29.3px;height:29.6px;border-radius:50%;background:linear-gradient(175deg,#f0f4f4 0%,#d4dcdd 40%,#a3b3b6 75%,#7d9195 100%);box-shadow:0 0 0 .6px rgba(70,80,80,.45)"></div><div style="left:34.2px;top:243.8px;width:22.4px;height:22.4px;border-radius:50%;background:radial-gradient(circle at 50% 30%,#2f7188,#28657b 60%,#1e5062 100%);box-shadow:0 0 0 .6px #5a7a80"></div><div style="left:44.699999999999996px;top:244.0px;width:1.4px;height:10.5px;background:#cdeed6"></div><div style="left:0px;top:282px;width:90px;height:3px;background:linear-gradient(#b0acac,#8e8a8a)"></div><div style="left:0px;top:285px;width:90px;height:2px;background:#050505"></div><div style="left:0px;top:287px;width:90px;height:29px;background:#383836"></div><div style="left:0px;top:287px;width:90px;height:2px;background:#42464c"></div><div style="left:0px;top:315px;width:90px;height:1px;background:#141414"></div><div style="left:89px;top:287px;width:1px;height:29px;background:#141414"></div><div style="left:3px;top:291px;width:84px;height:22px;background:#0e0c0a"></div><div style="left:4px;top:292px;width:82px;height:20px;background:radial-gradient(ellipse 40% 3px at 50% 0,rgba(255,235,200,.8),rgba(255,235,200,0)),linear-gradient(#b6a78c,#cbc0a6 25%,#d3c9b4 50%,#c6baa2 80%,#b3a68c)"></div><div style="left:0px;top:316px;width:90px;height:599px;background:linear-gradient(#262626 0,#353535 8px,#3a3a3a 16px,#3b3b3b)"></div><div style="left:0px;top:316px;width:1px;height:599px;background:#585858"></div><div style="left:89px;top:316px;width:1px;height:599px;background:#1e1e1e"></div><div style="left:14px;top:333px;width:8px;height:563px;background:#161616;border-radius:4px;box-shadow:0 -1px 0 #444"></div><div style="left:15.5px;top:336px;width:1px;height:557px;background:#3a3a3a"></div><div style="left:19.5px;top:336px;width:1px;height:557px;background:#2e2e2e"></div><div style="left:32px;top:333px;width:24px;height:563px;background:linear-gradient(#1f1f1f,#141414 40%,#050505 85%,#000)"></div><div style="left:56px;top:333px;width:1px;height:563px;background:#4c4c4c"></div><div style="left:32px;top:346px;width:24px;height:12px;color:#e2e2e2;font-size:9.5px;font-weight:bold;text-align:center;line-height:12px">-inf</div><div class="db" style="left:32px;top:365.6px;width:24px;height:8px;opacity:0.95">-0-</div><div class="db" style="left:32px;top:399px;width:24px;height:8px;opacity:0.88">-6-</div><div class="db" style="left:32px;top:433.8px;width:24px;height:8px;opacity:0.81">-12-</div><div class="db" style="left:32px;top:468px;width:24px;height:8px;opacity:0.74">-18-</div><div class="db" style="left:32px;top:502px;width:24px;height:8px;opacity:0.67">-24-</div><div class="db" style="left:32px;top:536px;width:24px;height:8px;opacity:0.60">-30-</div><div class="db" style="left:32px;top:571px;width:24px;height:8px;opacity:0.53">-36-</div><div class="db" style="left:32px;top:605.7px;width:24px;height:8px;opacity:0.46">-42-</div><div class="db" style="left:32px;top:639.5px;width:24px;height:8px;opacity:0.39">-48-</div><div class="db" style="left:32px;top:674px;width:24px;height:8px;opacity:0.32">-54-</div><div class="db" style="left:32px;top:709px;width:24px;height:8px;opacity:0.25">-60-</div><div class="db" style="left:32px;top:743px;width:24px;height:8px;opacity:0.25">-66-</div><div style="left:34px;top:886px;width:20px;height:1px;background:#454545"></div><div style="left:34px;top:887px;width:22px;height:8px;font-size:7.5px;font-weight:bold;line-height:8px;color:#6f6f6f;letter-spacing:.6px;text-indent:1px"><span style="color:#86a85a">M</span>SR</div><div class="btn" style="left:63px;top:343px;width:19px;height:14px;"><span class="bl">S</span></div><div class="btn" style="left:63px;top:365px;width:19px;height:14px;"><span class="bl">M</span></div><div class="btn" style="left:63px;top:387px;width:19px;height:14px;"><svg style="position:absolute;left:4px;top:1px" width="11" height="12" viewBox="0 0 11 12"><circle cx="5.5" cy="6" r="3.3" fill="none" stroke="#222" stroke-width="1.3"/><path d="M1.2 10.8L9.8 1.2" stroke="#222" stroke-width="1.2"/></svg></div><div class="btn" style="left:63px;top:603px;width:19px;height:14px;font-size:10.5px;letter-spacing:.2px"><span class="bl" style="transform:scaleX(1.12)">Fx</span></div><div style="left:67px;top:622px;width:11px;height:8px;border:1px solid #0a0a0a;background:#6e6e6e"></div><div class="btn" style="left:63px;top:879px;width:19px;height:14px;"><div style="left:5px;top:2px;width:10px;height:10px;border-radius:50%;border:2px solid #2a2a2a;background:#9a9a9a"></div></div><div style="left:5px;top:477px;width:25px;height:49px;background:radial-gradient(closest-side,rgba(0,0,0,.6),rgba(0,0,0,0))"></div><div style="left:8px;top:479px;width:19px;height:7px;background:linear-gradient(#dcdcdc,#f6f6f6 50%,#d4d4d4)"></div><div style="left:8px;top:486px;width:19px;height:1px;background:#2a2826"></div><div style="left:8px;top:487px;width:19px;height:13px;background:repeating-linear-gradient(#a6a29e 0,#a6a29e 1px,#75716d 1px,#75716d 2px)"></div><div style="left:8px;top:500px;width:19px;height:2px;background:#121212"></div><div style="left:8px;top:502px;width:19px;height:10px;background:repeating-linear-gradient(#b0b4b6 0,#b0b4b6 1px,#7e8284 1px,#7e8284 2px)"></div><div style="left:8px;top:512px;width:19px;height:4px;background:#d6d6d4"></div><div style="left:8px;top:516px;width:19px;height:1px;background:#f2f2f2"></div><div style="left:8px;top:517px;width:19px;height:6px;background:linear-gradient(#7c7c7c,#505050)"></div><div style="left:0px;top:915px;width:90px;height:2px;background:#0a0a0a"></div><div style="left:0px;top:917px;width:90px;height:25px;background:#1a1a1a"></div><div style="left:2px;top:920px;width:86px;height:19px;background:#111"></div><div style="left:3px;top:921px;width:84px;height:17px;background:linear-gradient(#777,#6a6a6a 50%,#5e5e5e)"></div><div style="left:9px;top:921px;width:40px;height:17px;font-family:'Liberation Serif',serif;font-weight:bold;font-size:12.5px;line-height:17px;color:#0a0a0a">15</div><div style="left:0px;top:942px;width:90px;height:1px;background:#7a7a7a"></div><div style="left:0px;top:943px;width:90px;height:22px;background:#2a2a2a"></div><div style="left:0px;top:942px;width:2px;height:34px;background:#6a6a6a"></div><div style="left:87px;top:942px;width:2px;height:34px;background:#6a6a6a"></div><div style="left:3px;top:944px;width:84px;height:20px;background:linear-gradient(#1c1c1c,#121212);border:1px solid #4a4a4a;border-top-color:#2a2a2a"></div><div style="left:2px;top:965px;width:85px;height:11px;background:linear-gradient(#3a3a3a,#454545)"></div><div style="left:0px;top:976px;width:90px;height:2px;background:#1b1e21"></div></div><div style="left:1529px;top:0px;width:6px;height:978px;background:#171717"></div><div class="strip" style="left:1534px;width:120px"><div style="left:0px;top:0px;width:90px;height:3px;background:#333"></div><div style="left:0px;top:3px;width:90px;height:1px;background:#1a1a1a"></div><div style="left:0px;top:4px;width:90px;height:1px;background:#4a4a4a"></div><div style="left:0px;top:5px;width:90px;height:6px;background:#363636"></div><div style="left:0px;top:11px;width:90px;height:1px;background:#4c4c4c"></div><div style="left:0px;top:12px;width:90px;height:1px;background:#0d0d0d"></div><div style="left:0px;top:13px;width:90px;height:10px;background:linear-gradient(#171717,#212121)"></div><div style="left:0px;top:23px;width:90px;height:1px;background:#141414"></div><div style="left:0px;top:24px;width:90px;height:1px;background:#3a3a3a"></div><div style="left:0px;top:25px;width:90px;height:12px;background:#232323"></div><div style="left:0px;top:37px;width:90px;height:1px;background:#141414"></div><div style="left:0px;top:38px;width:90px;height:1px;background:#3a3a3a"></div><div style="left:0px;top:39px;width:90px;height:12px;background:#232323"></div><div style="left:0px;top:51px;width:90px;height:1px;background:#141414"></div><div style="left:0px;top:52px;width:90px;height:1px;background:#3a3a3a"></div><div style="left:0px;top:53px;width:90px;height:12px;background:#232323"></div><div style="left:0px;top:65px;width:90px;height:1px;background:#141414"></div><div style="left:0px;top:66px;width:90px;height:1px;background:#3a3a3a"></div><div style="left:0px;top:67px;width:90px;height:12px;background:#232323"></div><div style="left:0px;top:79px;width:90px;height:1px;background:#141414"></div><div style="left:0px;top:80px;width:90px;height:1px;background:#3a3a3a"></div><div style="left:0px;top:81px;width:90px;height:12px;background:#232323"></div><div style="left:0px;top:93px;width:90px;height:1px;background:#141414"></div><div style="left:0px;top:94px;width:90px;height:1px;background:#3a3a3a"></div><div style="left:0px;top:95px;width:90px;height:12px;background:#232323"></div><div style="left:0px;top:107px;width:90px;height:1px;background:#141414"></div><div style="left:0px;top:108px;width:90px;height:1px;background:#3a3a3a"></div><div style="left:0px;top:109px;width:90px;height:12px;background:#232323"></div><div style="left:0px;top:121px;width:90px;height:1px;background:#141414"></div><div style="left:0px;top:122px;width:90px;height:1px;background:#3a3a3a"></div><div style="left:0px;top:123px;width:90px;height:12px;background:#232323"></div><div style="left:0px;top:135px;width:90px;height:1px;background:#141414"></div><div style="left:0px;top:136px;width:90px;height:1px;background:#3a3a3a"></div><div style="left:0px;top:0px;width:1px;height:136px;background:#262626"></div><div style="left:1px;top:0px;width:1px;height:136px;background:#080808"></div><div style="left:89px;top:0px;width:1px;height:136px;background:#080808"></div><div style="left:0px;top:136px;width:90px;height:2px;background:#050505"></div><div style="left:0px;top:138px;width:90px;height:1px;background:#3a3a3a"></div><div style="left:0px;top:139px;width:90px;height:5px;background:#151515"></div><div style="left:0px;top:144px;width:90px;height:29px;background:linear-gradient(#5e5c5c,#bebcbc 4px,#dad8d8 8px,#dcdada 24px,#cfcdcd)"></div><div style="left:89px;top:144px;width:1px;height:29px;background:#0a0a0a"></div><div style="left:5px;top:149px;width:80px;height:18px;background:linear-gradient(#5c5858,#6a6767 30%,#747272);border-radius:2px;box-shadow:0 1px 0 #f4f4f4;font-weight:bold;font-size:10px;color:#050505;text-align:center;line-height:19px;letter-spacing:.2px">0.00</div><div style="left:0px;top:173px;width:90px;height:3px;background:linear-gradient(#9a9898,#b6b4b4)"></div><div style="left:0px;top:176px;width:90px;height:23px;background:#c4c2c2"></div><div style="left:4px;top:178px;width:82px;height:17px;border:1px solid #5e5a5a;border-radius:2px;background:#c2c0c0"></div><div style="left:12px;top:182px;width:49px;height:9px;background:#0c0c0c;color:#a8a8a8;font-size:7.5px;font-weight:bold;letter-spacing:1.9px;text-align:center;line-height:9px;text-indent:2px">ENV</div><div style="left:67px;top:182px;width:12px;height:9px;border:1px solid #050505;background:linear-gradient(#9a9a9a,#7c7c7c)"></div><div style="left:0px;top:199px;width:90px;height:3px;background:#050505"></div><div style="left:0px;top:202px;width:90px;height:1px;background:#444"></div><div style="left:0px;top:203px;width:90px;height:21px;background:#1a1a1a;color:#84a0a8;font-size:10.5px;text-align:center;line-height:22px;letter-spacing:.4px;text-shadow:0 0 2px #0a3038">center</div><div style="left:0px;top:224px;width:90px;height:2px;background:#050505"></div><div style="left:0px;top:226px;width:90px;height:2px;background:#5a5858"></div><div style="left:0px;top:228px;width:90px;height:54px;background:#c6c2c2"></div><div style="left:4px;top:232px;width:82px;height:48px;border:1px solid #4a4646;border-top:3px solid #4c4848;border-bottom:3px solid #4c4848;border-radius:2px;background:#c6c2c2"></div><div style="left:41.5px;top:234px;width:8px;height:4.5px;background:#4c4848;clip-path:polygon(0 0,100% 0,50% 100%)"></div><div style="left:29.799999999999997px;top:239.9px;width:3.2px;height:3.2px;background:#2e2828;border-radius:50%"></div><div style="left:57.8px;top:239.9px;width:3.2px;height:3.2px;background:#2e2828;border-radius:50%"></div><div style="left:24.099999999999998px;top:253.9px;width:3.2px;height:3.2px;background:#2e2828;border-radius:50%"></div><div style="left:63.4px;top:253.9px;width:3.2px;height:3.2px;background:#2e2828;border-radius:50%"></div><div style="left:29.799999999999997px;top:267.9px;width:3.2px;height:3.2px;background:#2e2828;border-radius:50%"></div><div style="left:57.8px;top:267.9px;width:3.2px;height:3.2px;background:#2e2828;border-radius:50%"></div><div style="left:28.4px;top:244.5px;width:36px;height:32px;border-radius:50%;background:radial-gradient(closest-side,rgba(40,30,30,.55),rgba(40,30,30,0))"></div><div style="left:30.799999999999997px;top:240.7px;width:29.3px;height:29.6px;border-radius:50%;background:linear-gradient(175deg,#f0f4f4 0%,#d4dcdd 40%,#a3b3b6 75%,#7d9195 100%);box-shadow:0 0 0 .6px rgba(70,80,80,.45)"></div><div style="left:34.2px;top:243.8px;width:22.4px;height:22.4px;border-radius:50%;background:radial-gradient(circle at 50% 30%,#2f7188,#28657b 60%,#1e5062 100%);box-shadow:0 0 0 .6px #5a7a80"></div><div style="left:44.699999999999996px;top:244.0px;width:1.4px;height:10.5px;background:#cdeed6"></div><div style="left:0px;top:282px;width:90px;height:3px;background:linear-gradient(#b0acac,#8e8a8a)"></div><div style="left:0px;top:285px;width:90px;height:2px;background:#050505"></div><div style="left:0px;top:287px;width:90px;height:29px;background:#383836"></div><div style="left:0px;top:287px;width:90px;height:2px;background:#42464c"></div><div style="left:0px;top:315px;width:90px;height:1px;background:#141414"></div><div style="left:89px;top:287px;width:1px;height:29px;background:#141414"></div><div style="left:4px;top:291px;width:120px;height:22px;background:#111;border:1px solid #0c0c0c"></div><div style="left:5px;top:292px;width:120px;height:20px;background:linear-gradient(#c6b89c,#d2c8b2 40%,#c8bca4 70%,#b3a78e)"></div><div style="left:5px;top:292px;width:80px;height:20px;font-weight:bold;font-size:10.5px;letter-spacing:1.3px;color:#2e2a26;text-align:center;line-height:20px;text-indent:1px">MASTER</div><div style="left:0px;top:313px;width:120px;height:3px;background:#1a1a1a"></div><div style="left:0px;top:316px;width:120px;height:627px;background:linear-gradient(#333 0,#3a3a3a 14px,#3b3b3b)"></div><div style="left:0px;top:316px;width:1px;height:627px;background:#585858"></div><div style="left:13.5px;top:333px;width:8px;height:578px;background:#161616;border-radius:4px;box-shadow:0 -1px 0 #444"></div><div style="left:15px;top:336px;width:1px;height:572px;background:#3a3a3a"></div><div style="left:19px;top:336px;width:1px;height:572px;background:#2e2e2e"></div><div style="left:32.5px;top:333px;width:50px;height:579px;background:linear-gradient(#1f1f1f,#141414 40%,#050505 85%,#000)"></div><div style="left:82.5px;top:333px;width:1px;height:579px;background:#4c4c4c"></div><div style="left:34px;top:346px;width:24px;height:12px;color:#e2e2e2;font-size:9.5px;font-weight:bold;text-align:center;line-height:12px">-inf</div><div style="left:58px;top:346px;width:24px;height:12px;color:#e2e2e2;font-size:9.5px;font-weight:bold;text-align:center;line-height:12px">-inf</div><div style="left:34px;top:890px;width:24px;height:12px;color:#f0f0f0;font-size:9.5px;font-weight:bold;text-align:center;line-height:12px">-inf</div><div style="left:58px;top:890px;width:24px;height:12px;color:#f0f0f0;font-size:9.5px;font-weight:bold;text-align:center;line-height:12px">-inf</div><div style="left:34px;top:902px;width:46px;height:1px;background:#555"></div><div class="db" style="left:46px;top:365.6px;width:24px;height:8px;opacity:0.95">-0-</div><div class="db" style="left:46px;top:399px;width:24px;height:8px;opacity:0.90">-6-</div><div class="db" style="left:46px;top:433.8px;width:24px;height:8px;opacity:0.85">-12-</div><div class="db" style="left:46px;top:468px;width:24px;height:8px;opacity:0.80">-18-</div><div class="db" style="left:46px;top:503px;width:24px;height:8px;opacity:0.75">-24-</div><div class="db" style="left:46px;top:537px;width:24px;height:8px;opacity:0.70">-30-</div><div class="db" style="left:46px;top:571px;width:24px;height:8px;opacity:0.65">-36-</div><div class="db" style="left:46px;top:606.5px;width:24px;height:8px;opacity:0.60">-42-</div><div class="db" style="left:46px;top:641.5px;width:24px;height:8px;opacity:0.55">-48-</div><div class="db" style="left:46px;top:676px;width:24px;height:8px;opacity:0.50">-54-</div><div class="db" style="left:46px;top:711px;width:24px;height:8px;opacity:0.45">-60-</div><div class="db" style="left:46px;top:746px;width:24px;height:8px;opacity:0.40">-66-</div><div class="db" style="left:46px;top:780px;width:24px;height:8px;opacity:0.35">-72-</div><div class="db" style="left:46px;top:815px;width:24px;height:8px;opacity:0.30">-78-</div><div class="db" style="left:46px;top:851px;width:24px;height:8px;opacity:0.25">-84-</div><div style="left:5px;top:482px;width:25px;height:49px;background:radial-gradient(closest-side,rgba(0,0,0,.6),rgba(0,0,0,0))"></div><div style="left:8px;top:484px;width:19px;height:7px;background:linear-gradient(#dcdcdc,#f6f6f6 50%,#d4d4d4)"></div><div style="left:8px;top:491px;width:19px;height:1px;background:#2a2826"></div><div style="left:8px;top:492px;width:19px;height:13px;background:repeating-linear-gradient(#a6a29e 0,#a6a29e 1px,#75716d 1px,#75716d 2px)"></div><div style="left:8px;top:505px;width:19px;height:2px;background:#121212"></div><div style="left:8px;top:507px;width:19px;height:10px;background:repeating-linear-gradient(#b0b4b6 0,#b0b4b6 1px,#7e8284 1px,#7e8284 2px)"></div><div style="left:8px;top:517px;width:19px;height:4px;background:#d6d6d4"></div><div style="left:8px;top:521px;width:19px;height:1px;background:#f2f2f2"></div><div style="left:8px;top:522px;width:19px;height:6px;background:linear-gradient(#7c7c7c,#505050)"></div><div class="btn" style="left:8px;top:921px;width:19px;height:14px;"><svg style="position:absolute;left:5px;top:2px" width="9" height="10" viewBox="0 0 9 10"><path d="M1 5L6 1H8V9H6Z" fill="#262626"/></svg></div><div class="btn" style="left:34px;top:921px;width:19px;height:14px;"><span class="bl">M</span></div><div class="btn" style="left:60px;top:921px;width:19px;height:14px;"><span class="bl">S</span></div><div style="left:0px;top:942px;width:120px;height:1px;background:#777"></div><div style="left:0px;top:943px;width:120px;height:35px;background:#3a3a3a"></div><div style="left:0px;top:943px;width:1px;height:35px;background:#6a6a6a"></div><div style="left:2px;top:946px;width:27px;height:18px;background:#1c1c1c;border:1px solid #141414;box-shadow:inset 1px 1px 0 #2a2a2a"></div><div style="left:32px;top:946px;width:26px;height:18px;background:#1c1c1c;border:1px solid #141414;box-shadow:inset 1px 1px 0 #2a2a2a"></div><div style="left:61px;top:946px;width:26px;height:18px;background:#1c1c1c;border:1px solid #141414;box-shadow:inset 1px 1px 0 #2a2a2a"></div><div style="left:10px;top:949px;width:12px;height:12px;color:#9a9a9a;font-size:13px;font-weight:bold;text-align:center;line-height:12px">&#129093;</div><div style="left:33px;top:946px;width:26px;height:18px;color:#8a8a8a;font-size:10px;font-weight:bold;text-align:center;line-height:18px;letter-spacing:1px">Fx</div><div style="left:39px;top:967px;width:10px;height:8px;border:1px solid #111;background:#777"></div><svg style="position:absolute;left:66px;top:949px" width="18" height="12" viewBox="0 0 18 12"><g fill="#8a8a8a"><rect x="1" y="1" width="2" height="2"/><rect x="1" y="5" width="2" height="2"/><rect x="1" y="9" width="2" height="2"/><rect x="5" y="1" width="12" height="2"/><rect x="5" y="5" width="12" height="2"/><rect x="5" y="9" width="12" height="2"/></g></svg></div><div style="left:1536px;top:12px;width:72px;height:11px;color:#dce6e6;font-size:9.8px;line-height:11px;white-space:nowrap;background:#151515;overflow:hidden;padding-left:2px"><span style="text-decoration:underline;text-decoration-color:#4aa8a0">ASIO Out 1 / </span>AS</div><div style="left:1610px;top:13px;width:9px;height:9px;border-radius:50%;background:radial-gradient(circle at 40% 35%,#9a9a9a,#444)"></div><div style="left:852px;top:976px;width:160px;height:2px;background:#545454"></div><div style="left:419px;top:93px;width:458px;height:398px;background:#f0f0f0;border:1px solid #d9a890;border-top:none"></div><div style="left:419px;top:93px;width:458px;height:25px;background:#ca5010"></div><svg style="position:absolute;left:420px;top:95px" width="22" height="20" viewBox="0 0 22 20"><path d="M7 7Q12 4.5 16.8 8.4Q15.5 13.5 11.6 16.5Q11 11 7 7Z" fill="#a87070" opacity=".75"/><path d="M3.8 8.5Q4.5 14.5 10.8 17.3Q10.5 12 6.3 7.2Z" fill="#6cc040"/><path d="M5.2 5.6Q10.5 1.2 18.3 6.6" fill="none" stroke="#3f8a98" stroke-width="1.6"/><path d="M6 6.6Q10.5 3.6 16.8 8.2" fill="none" stroke="#eaf6f4" stroke-width="1.4"/><path d="M6.6 7Q11 10.5 11.6 16.5" fill="none" stroke="#fffbe0" stroke-width="1.7"/></svg><div class="lbl" style="left:444px;top:98.5px;transform:scaleX(0.95);color:#fff;font-size:12.5px">Project Settings</div><svg style="position:absolute;left:855px;top:100px" width="12" height="12" viewBox="0 0 12 12"><path d="M1 1L11 11M11 1L1 11" stroke="#fff" stroke-width="1.2"/></svg><div style="left:427px;top:146px;width:441px;height:311px;background:#f0f0f0;border:1px solid #d9d9d9;box-shadow:inset 1px 1px 0 #fff, inset -1px -1px 0 #fff"></div><div style="left:428px;top:128px;width:84px;height:19px;background:#f0f0f0;border:1px solid #d9d9d9"></div><div class="lbl" style="left:320.0px;top:130.5px;width:300px;text-align:center;transform-origin:50% 50%;transform:scaleX(0.87);">Project Settings</div><div style="left:512px;top:126px;width:45px;height:21px;background:#fff;border:1px solid #d9d9d9;border-bottom:none;z-index:2"></div><div class="lbl" style="left:384.5px;top:129px;width:300px;text-align:center;transform-origin:50% 50%;transform:scaleX(0.87);z-index:3">Media</div><div style="left:557px;top:128px;width:40px;height:19px;background:#f0f0f0;border:1px solid #d9d9d9"></div><div class="lbl" style="left:427.0px;top:130.5px;width:300px;text-align:center;transform-origin:50% 50%;transform:scaleX(0.87);">Video</div><div style="left:597px;top:128px;width:62px;height:19px;background:#f0f0f0;border:1px solid #d9d9d9"></div><div class="lbl" style="left:478.0px;top:130.5px;width:300px;text-align:center;transform-origin:50% 50%;transform:scaleX(0.87);">Advanced</div><div style="left:659px;top:128px;width:39px;height:19px;background:#f0f0f0;border:1px solid #d9d9d9"></div><div class="lbl" style="left:528.5px;top:130.5px;width:300px;text-align:center;transform-origin:50% 50%;transform:scaleX(0.87);">Notes</div><div class="lbl" style="left:439.5px;top:155.5px;transform:scaleX(0.87);">Path to save media files (can be relative, leave blank for same path as project file):</div><div style="left:439px;top:176px;width:360px;height:20px;background:#fff;border:1px solid #7a7a7a"></div><div class="lbl" style="left:442px;top:179px;transform:scaleX(0.87);">Audio Files</div><div class="wbtn" style="left:805px;top:176px;width:55px;height:20px;"></div><div class="lbl" style="left:682.5px;top:179.0px;width:300px;text-align:center;transform-origin:50% 50%;transform:scaleX(0.87);">Browse...</div><div class="lbl" style="left:439.5px;top:201.5px;transform:scaleX(0.87);">Secondary recording path (blank for none, can be enabled per-track):</div><div style="left:439px;top:220px;width:360px;height:20px;background:#fff;border:1px solid #7a7a7a"></div><div class="wbtn" style="left:805px;top:220px;width:55px;height:20px;"></div><div class="lbl" style="left:682.5px;top:223.0px;width:300px;text-align:center;transform-origin:50% 50%;transform:scaleX(0.87);">Browse...</div><div class="lbl" style="left:439px;top:253px;transform:scaleX(0.87);">On import of media to project:</div><div class="combo" style="left:592px;top:249px;width:267px;height:21px;"></div><div class="lbl" style="left:595px;top:252.5px;transform:scaleX(0.87);">Copy media to project path</div><svg style="position:absolute;left:844px;top:256.5px" width="11" height="7" viewBox="0 0 11 7"><path d="M.7 .8L5.5 5.6L10.3 .8" fill="none" stroke="#333" stroke-width="1.1"/></svg><div style="left:439px;top:281px;width:425px;height:113px;border:1px solid #dcdcdc;box-shadow:inset 1px 1px 0 #fff"></div><div style="left:446px;top:275px;width:52px;height:14px;background:#f0f0f0"></div><div class="lbl" style="left:448.5px;top:275px;transform:scaleX(0.87);">Recording</div><div class="lbl" style="left:445.5px;top:292.5px;transform:scaleX(0.87);">Audio format for new recordings:</div><div class="combo" style="left:600px;top:289px;width:242px;height:21px;"></div><div class="lbl" style="left:603px;top:292.5px;transform:scaleX(0.87);">WAV</div><svg style="position:absolute;left:827px;top:296.5px" width="11" height="7" viewBox="0 0 11 7"><path d="M.7 .8L5.5 5.6L10.3 .8" fill="none" stroke="#333" stroke-width="1.1"/></svg><div class="lbl" style="left:447px;top:321px;transform:scaleX(0.87);">WAV bit depth:</div><div class="combo" style="left:527px;top:317px;width:113px;height:21px;"></div><div class="lbl" style="left:530px;top:320.5px;transform:scaleX(0.87);">24 bit PCM</div><svg style="position:absolute;left:625px;top:324.5px" width="11" height="7" viewBox="0 0 11 7"><path d="M.7 .8L5.5 5.6L10.3 .8" fill="none" stroke="#333" stroke-width="1.1"/></svg><div class="lbl" style="left:647.5px;top:321px;transform:scaleX(0.87);">Large files:</div><div class="combo" style="left:705px;top:317px;width:129px;height:21px;"></div><div class="lbl" style="left:708px;top:320.5px;transform:scaleX(0.87);">Auto WAV/Wave64</div><svg style="position:absolute;left:819px;top:324.5px" width="11" height="7" viewBox="0 0 11 7"><path d="M.7 .8L5.5 5.6L10.3 .8" fill="none" stroke="#333" stroke-width="1.1"/></svg><div style="left:446px;top:345px;width:13px;height:13px;border:1px solid #333;background:#fff"></div><svg style="position:absolute;left:446px;top:345px" width="13" height="13" viewBox="0 0 13 13"><path d="M2.3 6.6L5 9.4L10.6 3.2" fill="none" stroke="#222" stroke-width="1.3"/></svg><div class="lbl" style="left:462px;top:344.5px;transform:scaleX(0.87);">Write BWF ('bext') chunk</div><div style="left:590px;top:345px;width:13px;height:13px;border:1px solid #333;background:#fff"></div><svg style="position:absolute;left:590px;top:345px" width="13" height="13" viewBox="0 0 13 13"><path d="M2.3 6.6L5 9.4L10.6 3.2" fill="none" stroke="#222" stroke-width="1.3"/></svg><div class="lbl" style="left:606px;top:344.5px;transform:scaleX(0.87);">Include project filename in BWF data</div><div class="combo" style="left:446px;top:362px;width:215px;height:21px;"></div><div class="lbl" style="left:449px;top:365.5px;transform:scaleX(0.87);">Markers + regions</div><svg style="position:absolute;left:646px;top:369.5px" width="11" height="7" viewBox="0 0 11 7"><path d="M.7 .8L5.5 5.6L10.3 .8" fill="none" stroke="#333" stroke-width="1.1"/></svg><div style="left:669px;top:366px;width:13px;height:13px;border:1px solid #333;background:#fff"></div><svg style="position:absolute;left:669px;top:366px" width="13" height="13" viewBox="0 0 13 13"><path d="M2.3 6.6L5 9.4L10.6 3.2" fill="none" stroke="#222" stroke-width="1.3"/></svg><div class="lbl" style="left:685px;top:365.5px;transform:scaleX(0.87);">Embed tempo</div><div class="lbl" style="left:439.5px;top:403.5px;transform:scaleX(0.87);">Format for Apply FX, Glue, Freeze, etc:</div><div class="combo" style="left:652px;top:400px;width:207px;height:21px;"></div><div class="lbl" style="left:655px;top:403.5px;transform:scaleX(0.87);">Custom: 24bit WAV...</div><svg style="position:absolute;left:844px;top:407.5px" width="11" height="7" viewBox="0 0 11 7"><path d="M.7 .8L5.5 5.6L10.3 .8" fill="none" stroke="#333" stroke-width="1.1"/></svg><div class="lbl" style="left:439.5px;top:432px;transform:scaleX(0.87);">Default format for Render to File dialog:</div><div class="wbtn" style="left:652px;top:429px;width:207px;height:19px;"></div><div class="lbl" style="left:605.5px;top:431.5px;width:300px;text-align:center;transform-origin:50% 50%;transform:scaleX(0.87);">24bit WAV</div><div class="wbtn" style="left:529px;top:463px;width:73px;height:21px;border:2px solid #0078d7;"></div><div class="lbl" style="left:415.5px;top:466.5px;width:300px;text-align:center;transform-origin:50% 50%;transform:scaleX(0.87);">OK</div><div class="wbtn" style="left:610px;top:463px;width:73px;height:21px;"></div><div class="lbl" style="left:496.5px;top:466.5px;width:300px;text-align:center;transform-origin:50% 50%;transform:scaleX(0.87);">Cancel</div><div class="wbtn" style="left:691px;top:463px;width:172px;height:21px;"></div><div class="lbl" style="left:627.0px;top:466.5px;width:300px;text-align:center;transform-origin:50% 50%;transform:scaleX(0.87);">Save as default project settings</div><div style="left:401px;top:166px;width:116px;height:42px;border:4.5px solid #e41e26"></div></body></html>
